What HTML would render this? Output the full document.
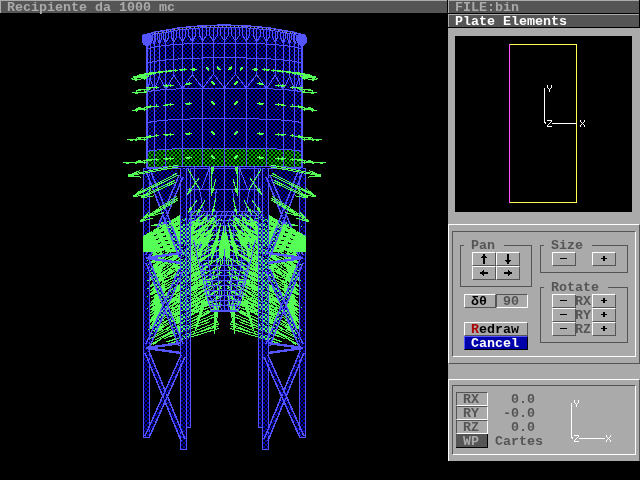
<!DOCTYPE html>
<html><head><meta charset="utf-8"><style>
html,body{margin:0;padding:0;background:#000;}
#root{position:relative;width:640px;height:480px;overflow:hidden;background:#000;font-family:"Liberation Mono",monospace;}
.abs{position:absolute;}
.t{position:absolute;font-family:"Liberation Mono",monospace;font-size:13.33px;line-height:14px;font-weight:bold;white-space:pre;margin-top:1px;margin-left:-1px;will-change:transform;}
svg{position:absolute;left:0;top:0;}
.btn{position:absolute;box-sizing:border-box;background:#aaa;border-top:1px solid #fff;border-left:1px solid #fff;border-right:1px solid #555;border-bottom:1px solid #555;}
.sunk{position:absolute;box-sizing:border-box;background:#aaa;border-top:1px solid #555;border-left:1px solid #555;border-right:1px solid #fff;border-bottom:1px solid #fff;}
</style></head><body><div id="root">
<svg width="448" height="480" viewBox="0 0 448 480" shape-rendering="crispEdges">
<rect width="448" height="480" fill="#000"/>
<defs>
<pattern id="cb" width="4" height="4" patternUnits="userSpaceOnUse"><rect x="1" y="0" width="2" height="2" fill="#0000aa"/><rect x="3" y="2" width="1" height="2" fill="#0000aa"/><rect x="0" y="2" width="1" height="2" fill="#0000aa"/></pattern>
<pattern id="cg" width="4" height="4" patternUnits="userSpaceOnUse"><rect x="1" y="0" width="2" height="2" fill="#00aa00"/><rect x="3" y="2" width="1" height="2" fill="#00aa00"/><rect x="0" y="2" width="1" height="2" fill="#00aa00"/></pattern>
</defs>
<polygon points="146.5,37.0 148.5,35.0 150.5,34.0 152.5,33.3 154.5,32.7 156.5,32.2 158.5,31.8 160.5,31.4 162.5,31.0 164.5,30.7 166.5,30.4 168.5,30.1 170.5,29.8 172.5,29.6 174.5,29.4 176.5,29.1 178.5,29.0 180.5,28.8 182.5,28.6 184.5,28.4 186.5,28.3 188.5,28.1 190.5,28.0 192.5,27.9 194.5,27.8 196.5,27.7 198.5,27.6 200.5,27.5 202.5,27.4 204.5,27.3 206.5,27.3 208.5,27.2 210.5,27.2 212.5,27.1 214.5,27.1 216.5,27.1 218.5,27.0 220.5,27.0 222.5,27.0 224.5,27.0 226.5,27.0 228.5,27.0 230.5,27.0 232.5,27.1 234.5,27.1 236.5,27.1 238.5,27.2 240.5,27.2 242.5,27.3 244.5,27.3 246.5,27.4 248.5,27.5 250.5,27.6 252.5,27.7 254.5,27.8 256.5,27.9 258.5,28.0 260.5,28.1 262.5,28.3 264.5,28.4 266.5,28.6 268.5,28.8 270.5,29.0 272.5,29.1 274.5,29.4 276.5,29.6 278.5,29.8 280.5,30.1 282.5,30.4 284.5,30.7 286.5,31.0 288.5,31.4 290.5,31.8 292.5,32.2 294.5,32.7 296.5,33.3 298.5,34.0 300.5,35.0 302.5,37.0 302.5,168.5 300.5,168.0 298.5,167.8 296.5,167.6 294.5,167.4 292.5,167.3 290.5,167.2 288.5,167.1 286.5,167.0 284.5,166.9 282.5,166.8 280.5,166.8 278.5,166.7 276.5,166.6 274.5,166.6 272.5,166.5 270.5,166.5 268.5,166.4 266.5,166.4 264.5,166.4 262.5,166.3 260.5,166.3 258.5,166.3 256.5,166.2 254.5,166.2 252.5,166.2 250.5,166.1 248.5,166.1 246.5,166.1 244.5,166.1 242.5,166.1 240.5,166.1 238.5,166.0 236.5,166.0 234.5,166.0 232.5,166.0 230.5,166.0 228.5,166.0 226.5,166.0 224.5,166.0 222.5,166.0 220.5,166.0 218.5,166.0 216.5,166.0 214.5,166.0 212.5,166.0 210.5,166.0 208.5,166.1 206.5,166.1 204.5,166.1 202.5,166.1 200.5,166.1 198.5,166.1 196.5,166.2 194.5,166.2 192.5,166.2 190.5,166.3 188.5,166.3 186.5,166.3 184.5,166.4 182.5,166.4 180.5,166.4 178.5,166.5 176.5,166.5 174.5,166.6 172.5,166.6 170.5,166.7 168.5,166.8 166.5,166.8 164.5,166.9 162.5,167.0 160.5,167.1 158.5,167.2 156.5,167.3 154.5,167.4 152.5,167.6 150.5,167.8 148.5,168.0 146.5,168.5" fill="url(#cb)"/>
<polygon points="146.5,152.0 148.5,151.2 150.5,150.8 152.5,150.5 154.5,150.3 156.5,150.1 158.5,149.9 160.5,149.7 162.5,149.6 164.5,149.5 166.5,149.3 168.5,149.2 170.5,149.1 172.5,149.0 174.5,148.9 176.5,148.9 178.5,148.8 180.5,148.7 182.5,148.6 184.5,148.6 186.5,148.5 188.5,148.5 190.5,148.4 192.5,148.4 194.5,148.3 196.5,148.3 198.5,148.2 200.5,148.2 202.5,148.2 204.5,148.1 206.5,148.1 208.5,148.1 210.5,148.1 212.5,148.0 214.5,148.0 216.5,148.0 218.5,148.0 220.5,148.0 222.5,148.0 224.5,148.0 226.5,148.0 228.5,148.0 230.5,148.0 232.5,148.0 234.5,148.0 236.5,148.0 238.5,148.1 240.5,148.1 242.5,148.1 244.5,148.1 246.5,148.2 248.5,148.2 250.5,148.2 252.5,148.3 254.5,148.3 256.5,148.4 258.5,148.4 260.5,148.5 262.5,148.5 264.5,148.6 266.5,148.6 268.5,148.7 270.5,148.8 272.5,148.9 274.5,148.9 276.5,149.0 278.5,149.1 280.5,149.2 282.5,149.3 284.5,149.5 286.5,149.6 288.5,149.7 290.5,149.9 292.5,150.1 294.5,150.3 296.5,150.5 298.5,150.8 300.5,151.2 302.5,152.0 302.5,168.5 300.5,168.0 298.5,167.8 296.5,167.6 294.5,167.4 292.5,167.3 290.5,167.2 288.5,167.1 286.5,167.0 284.5,166.9 282.5,166.8 280.5,166.8 278.5,166.7 276.5,166.6 274.5,166.6 272.5,166.5 270.5,166.5 268.5,166.4 266.5,166.4 264.5,166.4 262.5,166.3 260.5,166.3 258.5,166.3 256.5,166.2 254.5,166.2 252.5,166.2 250.5,166.1 248.5,166.1 246.5,166.1 244.5,166.1 242.5,166.1 240.5,166.1 238.5,166.0 236.5,166.0 234.5,166.0 232.5,166.0 230.5,166.0 228.5,166.0 226.5,166.0 224.5,166.0 222.5,166.0 220.5,166.0 218.5,166.0 216.5,166.0 214.5,166.0 212.5,166.0 210.5,166.0 208.5,166.1 206.5,166.1 204.5,166.1 202.5,166.1 200.5,166.1 198.5,166.1 196.5,166.2 194.5,166.2 192.5,166.2 190.5,166.3 188.5,166.3 186.5,166.3 184.5,166.4 182.5,166.4 180.5,166.4 178.5,166.5 176.5,166.5 174.5,166.6 172.5,166.6 170.5,166.7 168.5,166.8 166.5,166.8 164.5,166.9 162.5,167.0 160.5,167.1 158.5,167.2 156.5,167.3 154.5,167.4 152.5,167.6 150.5,167.8 148.5,168.0 146.5,168.5" fill="url(#cg)"/>
<polygon points="187.0,167.0 263.0,167.0 263.0,211.0 255.5,240.0 250.5,262.0 238.0,311.0 211.0,311.0 198.5,262.0 193.5,240.0 187.0,211.0" fill="url(#cb)"/>
<rect x="187" y="189" width="76" height="1" fill="#5555ff"/>
<rect x="187" y="211" width="76" height="1" fill="#5555ff"/>
<rect x="194" y="167" width="1" height="44" fill="#5555ff"/>
<rect x="209" y="167" width="1" height="44" fill="#5555ff"/>
<rect x="224" y="167" width="1" height="44" fill="#5555ff"/>
<rect x="239" y="167" width="1" height="44" fill="#5555ff"/>
<rect x="254" y="167" width="1" height="44" fill="#5555ff"/>
<line x1="187.5" y1="168.0" x2="199.5" y2="189.0" stroke="#5555ff" stroke-width="1"/>
<line x1="261.5" y1="168.0" x2="249.5" y2="189.0" stroke="#5555ff" stroke-width="1"/>
<line x1="199.5" y1="189.0" x2="203.5" y2="211.0" stroke="#5555ff" stroke-width="1"/>
<line x1="249.5" y1="189.0" x2="245.5" y2="211.0" stroke="#5555ff" stroke-width="1"/>
<line x1="209.5" y1="168.0" x2="201.5" y2="189.0" stroke="#5555ff" stroke-width="1"/>
<line x1="239.5" y1="168.0" x2="247.5" y2="189.0" stroke="#5555ff" stroke-width="1"/>
<line x1="216.5" y1="189.0" x2="213.5" y2="211.0" stroke="#5555ff" stroke-width="1"/>
<line x1="232.5" y1="189.0" x2="235.5" y2="211.0" stroke="#5555ff" stroke-width="1"/>
<rect x="187" y="215" width="73" height="1" fill="#5555ff"/>
<rect x="189" y="220" width="70" height="1" fill="#5555ff"/>
<rect x="190" y="225" width="68" height="1" fill="#5555ff"/>
<rect x="191" y="230" width="66" height="1" fill="#5555ff"/>
<rect x="192" y="235" width="64" height="1" fill="#5555ff"/>
<rect x="193" y="240" width="62" height="1" fill="#5555ff"/>
<rect x="194" y="245" width="59" height="1" fill="#5555ff"/>
<rect x="195" y="250" width="57" height="1" fill="#5555ff"/>
<rect x="196" y="255" width="55" height="1" fill="#5555ff"/>
<rect x="198" y="260" width="52" height="1" fill="#5555ff"/>
<rect x="199" y="265" width="50" height="1" fill="#5555ff"/>
<rect x="200" y="270" width="47" height="1" fill="#5555ff"/>
<rect x="201" y="275" width="45" height="1" fill="#5555ff"/>
<rect x="203" y="280" width="42" height="1" fill="#5555ff"/>
<rect x="204" y="285" width="40" height="1" fill="#5555ff"/>
<rect x="205" y="290" width="37" height="1" fill="#5555ff"/>
<rect x="206" y="295" width="35" height="1" fill="#5555ff"/>
<rect x="208" y="300" width="32" height="1" fill="#5555ff"/>
<rect x="209" y="305" width="30" height="1" fill="#5555ff"/>
<rect x="210" y="310" width="27" height="1" fill="#5555ff"/>
<polyline points="191.5,211.0 193.2,262.0 211.3,311.0" fill="none" stroke="#5555ff" stroke-width="1"/>
<polyline points="199.5,211.0 200.8,262.0 214.5,311.0" fill="none" stroke="#5555ff" stroke-width="1"/>
<polyline points="207.5,211.0 208.3,262.0 217.7,311.0" fill="none" stroke="#5555ff" stroke-width="1"/>
<polyline points="216.5,211.0 216.9,262.0 221.3,311.0" fill="none" stroke="#5555ff" stroke-width="1"/>
<polyline points="224.5,211.0 224.5,262.0 224.5,311.0" fill="none" stroke="#5555ff" stroke-width="1"/>
<polyline points="233.5,211.0 233.1,262.0 228.1,311.0" fill="none" stroke="#5555ff" stroke-width="1"/>
<polyline points="242.5,211.0 241.6,262.0 231.7,311.0" fill="none" stroke="#5555ff" stroke-width="1"/>
<polyline points="250.5,211.0 249.2,262.0 234.9,311.0" fill="none" stroke="#5555ff" stroke-width="1"/>
<polyline points="258.5,211.0 256.8,262.0 238.1,311.0" fill="none" stroke="#5555ff" stroke-width="1"/>
<rect x="187" y="225" width="76" height="1" fill="#5555ff"/>
<line x1="187.5" y1="224.0" x2="192.5" y2="212.0" stroke="#5555ff" stroke-width="1"/>
<line x1="192.5" y1="224.0" x2="197.5" y2="212.0" stroke="#5555ff" stroke-width="1"/>
<line x1="197.5" y1="224.0" x2="202.5" y2="212.0" stroke="#5555ff" stroke-width="1"/>
<line x1="202.5" y1="224.0" x2="207.5" y2="212.0" stroke="#5555ff" stroke-width="1"/>
<line x1="207.5" y1="224.0" x2="212.5" y2="212.0" stroke="#5555ff" stroke-width="1"/>
<line x1="212.5" y1="224.0" x2="217.5" y2="212.0" stroke="#5555ff" stroke-width="1"/>
<line x1="217.5" y1="224.0" x2="222.5" y2="212.0" stroke="#5555ff" stroke-width="1"/>
<line x1="222.5" y1="224.0" x2="227.5" y2="212.0" stroke="#5555ff" stroke-width="1"/>
<line x1="227.5" y1="224.0" x2="232.5" y2="212.0" stroke="#5555ff" stroke-width="1"/>
<line x1="232.5" y1="224.0" x2="237.5" y2="212.0" stroke="#5555ff" stroke-width="1"/>
<line x1="237.5" y1="224.0" x2="242.5" y2="212.0" stroke="#5555ff" stroke-width="1"/>
<line x1="242.5" y1="224.0" x2="247.5" y2="212.0" stroke="#5555ff" stroke-width="1"/>
<line x1="247.5" y1="224.0" x2="252.5" y2="212.0" stroke="#5555ff" stroke-width="1"/>
<line x1="252.5" y1="224.0" x2="257.5" y2="212.0" stroke="#5555ff" stroke-width="1"/>
<line x1="257.5" y1="224.0" x2="262.5" y2="212.0" stroke="#5555ff" stroke-width="1"/>
<line x1="147.5" y1="39.0" x2="147.5" y2="79.5" stroke="#5555ff" stroke-width="1"/>
<line x1="147.5" y1="37.6" x2="147.5" y2="168.1" stroke="#5555ff" stroke-width="1"/>
<line x1="150.5" y1="36.2" x2="150.5" y2="77.9" stroke="#5555ff" stroke-width="1"/>
<line x1="154.5" y1="34.8" x2="154.5" y2="167.5" stroke="#5555ff" stroke-width="1"/>
<line x1="159.5" y1="33.6" x2="159.5" y2="76.5" stroke="#5555ff" stroke-width="1"/>
<line x1="165.5" y1="32.4" x2="165.5" y2="166.9" stroke="#5555ff" stroke-width="1"/>
<line x1="173.5" y1="31.4" x2="173.5" y2="75.3" stroke="#5555ff" stroke-width="1"/>
<line x1="182.5" y1="30.6" x2="182.5" y2="166.4" stroke="#5555ff" stroke-width="1"/>
<line x1="192.5" y1="29.9" x2="192.5" y2="74.5" stroke="#5555ff" stroke-width="1"/>
<line x1="202.5" y1="29.4" x2="202.5" y2="166.1" stroke="#5555ff" stroke-width="1"/>
<line x1="213.5" y1="29.1" x2="213.5" y2="74.1" stroke="#5555ff" stroke-width="1"/>
<line x1="224.5" y1="29.0" x2="224.5" y2="166.0" stroke="#5555ff" stroke-width="1"/>
<line x1="235.5" y1="29.1" x2="235.5" y2="74.1" stroke="#5555ff" stroke-width="1"/>
<line x1="246.5" y1="29.4" x2="246.5" y2="166.1" stroke="#5555ff" stroke-width="1"/>
<line x1="256.5" y1="29.9" x2="256.5" y2="74.5" stroke="#5555ff" stroke-width="1"/>
<line x1="266.5" y1="30.6" x2="266.5" y2="166.4" stroke="#5555ff" stroke-width="1"/>
<line x1="275.5" y1="31.4" x2="275.5" y2="75.3" stroke="#5555ff" stroke-width="1"/>
<line x1="283.5" y1="32.4" x2="283.5" y2="166.9" stroke="#5555ff" stroke-width="1"/>
<line x1="289.5" y1="33.6" x2="289.5" y2="76.5" stroke="#5555ff" stroke-width="1"/>
<line x1="294.5" y1="34.8" x2="294.5" y2="167.5" stroke="#5555ff" stroke-width="1"/>
<line x1="298.5" y1="36.2" x2="298.5" y2="77.9" stroke="#5555ff" stroke-width="1"/>
<line x1="301.5" y1="37.6" x2="301.5" y2="168.1" stroke="#5555ff" stroke-width="1"/>
<line x1="301.5" y1="39.0" x2="301.5" y2="79.5" stroke="#5555ff" stroke-width="1"/>
<line x1="146.5" y1="36.0" x2="146.5" y2="168.0" stroke="#5555ff" stroke-width="1"/>
<line x1="302.5" y1="36.0" x2="302.5" y2="168.0" stroke="#5555ff" stroke-width="1"/>
<polyline points="146.5,50.0 148.5,48.6 150.5,47.9 152.5,47.4 154.5,47.0 156.5,46.6 158.5,46.3 160.5,46.1 162.5,45.8 164.5,45.6 166.5,45.4 168.5,45.2 170.5,45.0 172.5,44.8 174.5,44.7 176.5,44.5 178.5,44.4 180.5,44.2 182.5,44.1 184.5,44.0 186.5,43.9 188.5,43.8 190.5,43.7 192.5,43.6 194.5,43.5 196.5,43.5 198.5,43.4 200.5,43.3 202.5,43.3 204.5,43.2 206.5,43.2 208.5,43.2 210.5,43.1 212.5,43.1 214.5,43.1 216.5,43.0 218.5,43.0 220.5,43.0 222.5,43.0 224.5,43.0 226.5,43.0 228.5,43.0 230.5,43.0 232.5,43.0 234.5,43.1 236.5,43.1 238.5,43.1 240.5,43.2 242.5,43.2 244.5,43.2 246.5,43.3 248.5,43.3 250.5,43.4 252.5,43.5 254.5,43.5 256.5,43.6 258.5,43.7 260.5,43.8 262.5,43.9 264.5,44.0 266.5,44.1 268.5,44.2 270.5,44.4 272.5,44.5 274.5,44.7 276.5,44.8 278.5,45.0 280.5,45.2 282.5,45.4 284.5,45.6 286.5,45.8 288.5,46.1 290.5,46.3 292.5,46.6 294.5,47.0 296.5,47.4 298.5,47.9 300.5,48.6 302.5,50.0" fill="none" stroke="#5555ff" stroke-width="1"/>
<polyline points="146.5,64.2 148.5,62.9 150.5,62.3 152.5,61.8 154.5,61.4 156.5,61.1 158.5,60.8 160.5,60.5 162.5,60.3 164.5,60.1 166.5,59.9 168.5,59.7 170.5,59.5 172.5,59.4 174.5,59.2 176.5,59.1 178.5,59.0 180.5,58.8 182.5,58.7 184.5,58.6 186.5,58.5 188.5,58.4 190.5,58.4 192.5,58.3 194.5,58.2 196.5,58.1 198.5,58.1 200.5,58.0 202.5,58.0 204.5,57.9 206.5,57.9 208.5,57.8 210.5,57.8 212.5,57.8 214.5,57.8 216.5,57.7 218.5,57.7 220.5,57.7 222.5,57.7 224.5,57.7 226.5,57.7 228.5,57.7 230.5,57.7 232.5,57.7 234.5,57.8 236.5,57.8 238.5,57.8 240.5,57.8 242.5,57.9 244.5,57.9 246.5,58.0 248.5,58.0 250.5,58.1 252.5,58.1 254.5,58.2 256.5,58.3 258.5,58.4 260.5,58.4 262.5,58.5 264.5,58.6 266.5,58.7 268.5,58.8 270.5,59.0 272.5,59.1 274.5,59.2 276.5,59.4 278.5,59.5 280.5,59.7 282.5,59.9 284.5,60.1 286.5,60.3 288.5,60.5 290.5,60.8 292.5,61.1 294.5,61.4 296.5,61.8 298.5,62.3 300.5,62.9 302.5,64.2" fill="none" stroke="#5555ff" stroke-width="1"/>
<polyline points="146.5,92.5 148.5,91.6 150.5,91.2 152.5,90.8 154.5,90.6 156.5,90.3 158.5,90.1 160.5,90.0 162.5,89.8 164.5,89.7 166.5,89.5 168.5,89.4 170.5,89.3 172.5,89.2 174.5,89.1 176.5,89.0 178.5,88.9 180.5,88.8 182.5,88.7 184.5,88.6 186.5,88.6 188.5,88.5 190.5,88.5 192.5,88.4 194.5,88.4 196.5,88.3 198.5,88.3 200.5,88.2 202.5,88.2 204.5,88.2 206.5,88.1 208.5,88.1 210.5,88.1 212.5,88.1 214.5,88.0 216.5,88.0 218.5,88.0 220.5,88.0 222.5,88.0 224.5,88.0 226.5,88.0 228.5,88.0 230.5,88.0 232.5,88.0 234.5,88.0 236.5,88.1 238.5,88.1 240.5,88.1 242.5,88.1 244.5,88.2 246.5,88.2 248.5,88.2 250.5,88.3 252.5,88.3 254.5,88.4 256.5,88.4 258.5,88.5 260.5,88.5 262.5,88.6 264.5,88.6 266.5,88.7 268.5,88.8 270.5,88.9 272.5,89.0 274.5,89.1 276.5,89.2 278.5,89.3 280.5,89.4 282.5,89.5 284.5,89.7 286.5,89.8 288.5,90.0 290.5,90.1 292.5,90.3 294.5,90.6 296.5,90.8 298.5,91.2 300.5,91.6 302.5,92.5" fill="none" stroke="#5555ff" stroke-width="1"/>
<polyline points="146.5,123.5 148.5,122.5 150.5,122.0 152.5,121.7 154.5,121.4 156.5,121.1 158.5,120.9 160.5,120.7 162.5,120.5 164.5,120.3 166.5,120.2 168.5,120.0 170.5,119.9 172.5,119.8 174.5,119.7 176.5,119.6 178.5,119.5 180.5,119.4 182.5,119.3 184.5,119.2 186.5,119.1 188.5,119.1 190.5,119.0 192.5,118.9 194.5,118.9 196.5,118.8 198.5,118.8 200.5,118.7 202.5,118.7 204.5,118.7 206.5,118.6 208.5,118.6 210.5,118.6 212.5,118.6 214.5,118.5 216.5,118.5 218.5,118.5 220.5,118.5 222.5,118.5 224.5,118.5 226.5,118.5 228.5,118.5 230.5,118.5 232.5,118.5 234.5,118.5 236.5,118.6 238.5,118.6 240.5,118.6 242.5,118.6 244.5,118.7 246.5,118.7 248.5,118.7 250.5,118.8 252.5,118.8 254.5,118.9 256.5,118.9 258.5,119.0 260.5,119.1 262.5,119.1 264.5,119.2 266.5,119.3 268.5,119.4 270.5,119.5 272.5,119.6 274.5,119.7 276.5,119.8 278.5,119.9 280.5,120.0 282.5,120.2 284.5,120.3 286.5,120.5 288.5,120.7 290.5,120.9 292.5,121.1 294.5,121.4 296.5,121.7 298.5,122.0 300.5,122.5 302.5,123.5" fill="none" stroke="#5555ff" stroke-width="1"/>
<polyline points="146.5,152.0 148.5,151.2 150.5,150.8 152.5,150.5 154.5,150.3 156.5,150.1 158.5,149.9 160.5,149.7 162.5,149.6 164.5,149.5 166.5,149.3 168.5,149.2 170.5,149.1 172.5,149.0 174.5,148.9 176.5,148.9 178.5,148.8 180.5,148.7 182.5,148.6 184.5,148.6 186.5,148.5 188.5,148.5 190.5,148.4 192.5,148.4 194.5,148.3 196.5,148.3 198.5,148.2 200.5,148.2 202.5,148.2 204.5,148.1 206.5,148.1 208.5,148.1 210.5,148.1 212.5,148.0 214.5,148.0 216.5,148.0 218.5,148.0 220.5,148.0 222.5,148.0 224.5,148.0 226.5,148.0 228.5,148.0 230.5,148.0 232.5,148.0 234.5,148.0 236.5,148.0 238.5,148.1 240.5,148.1 242.5,148.1 244.5,148.1 246.5,148.2 248.5,148.2 250.5,148.2 252.5,148.3 254.5,148.3 256.5,148.4 258.5,148.4 260.5,148.5 262.5,148.5 264.5,148.6 266.5,148.6 268.5,148.7 270.5,148.8 272.5,148.9 274.5,148.9 276.5,149.0 278.5,149.1 280.5,149.2 282.5,149.3 284.5,149.5 286.5,149.6 288.5,149.7 290.5,149.9 292.5,150.1 294.5,150.3 296.5,150.5 298.5,150.8 300.5,151.2 302.5,152.0" fill="none" stroke="#5555ff" stroke-width="1"/>
<polyline points="146.5,168.5 148.5,168.0 150.5,167.8 152.5,167.6 154.5,167.4 156.5,167.3 158.5,167.2 160.5,167.1 162.5,167.0 164.5,166.9 166.5,166.8 168.5,166.8 170.5,166.7 172.5,166.6 174.5,166.6 176.5,166.5 178.5,166.5 180.5,166.4 182.5,166.4 184.5,166.4 186.5,166.3 188.5,166.3 190.5,166.3 192.5,166.2 194.5,166.2 196.5,166.2 198.5,166.1 200.5,166.1 202.5,166.1 204.5,166.1 206.5,166.1 208.5,166.1 210.5,166.0 212.5,166.0 214.5,166.0 216.5,166.0 218.5,166.0 220.5,166.0 222.5,166.0 224.5,166.0 226.5,166.0 228.5,166.0 230.5,166.0 232.5,166.0 234.5,166.0 236.5,166.0 238.5,166.0 240.5,166.1 242.5,166.1 244.5,166.1 246.5,166.1 248.5,166.1 250.5,166.1 252.5,166.2 254.5,166.2 256.5,166.2 258.5,166.3 260.5,166.3 262.5,166.3 264.5,166.4 266.5,166.4 268.5,166.4 270.5,166.5 272.5,166.5 274.5,166.6 276.5,166.6 278.5,166.7 280.5,166.8 282.5,166.8 284.5,166.9 286.5,167.0 288.5,167.1 290.5,167.2 292.5,167.3 294.5,167.4 296.5,167.6 298.5,167.8 300.5,168.0 302.5,168.5" fill="none" stroke="#5555ff" stroke-width="1"/>
<line x1="147.5" y1="36.2" x2="147.5" y2="42.6" stroke="#5555ff" stroke-width="1"/>
<line x1="147.5" y1="42.6" x2="147.5" y2="48.0" stroke="#5555ff" stroke-width="1"/>
<line x1="147.5" y1="36.2" x2="147.5" y2="42.2" stroke="#5555ff" stroke-width="1"/>
<line x1="147.5" y1="42.2" x2="147.5" y2="47.0" stroke="#5555ff" stroke-width="1"/>
<line x1="147.5" y1="36.1" x2="147.5" y2="41.9" stroke="#5555ff" stroke-width="1"/>
<line x1="148.5" y1="35.9" x2="148.5" y2="41.5" stroke="#5555ff" stroke-width="1"/>
<line x1="148.5" y1="41.5" x2="147.5" y2="47.0" stroke="#5555ff" stroke-width="1"/>
<line x1="149.5" y1="35.7" x2="149.5" y2="41.1" stroke="#5555ff" stroke-width="1"/>
<line x1="149.5" y1="41.1" x2="150.5" y2="46.0" stroke="#5555ff" stroke-width="1"/>
<line x1="150.5" y1="35.5" x2="150.5" y2="40.7" stroke="#5555ff" stroke-width="1"/>
<line x1="151.5" y1="35.1" x2="151.5" y2="40.4" stroke="#5555ff" stroke-width="1"/>
<line x1="151.5" y1="40.4" x2="150.5" y2="46.0" stroke="#5555ff" stroke-width="1"/>
<line x1="152.5" y1="34.7" x2="152.5" y2="40.0" stroke="#5555ff" stroke-width="1"/>
<line x1="152.5" y1="40.0" x2="154.5" y2="45.1" stroke="#5555ff" stroke-width="1"/>
<line x1="154.5" y1="34.3" x2="154.5" y2="39.7" stroke="#5555ff" stroke-width="1"/>
<line x1="155.5" y1="33.8" x2="155.5" y2="39.3" stroke="#5555ff" stroke-width="1"/>
<line x1="155.5" y1="39.3" x2="154.5" y2="45.1" stroke="#5555ff" stroke-width="1"/>
<line x1="157.5" y1="33.5" x2="157.5" y2="39.0" stroke="#5555ff" stroke-width="1"/>
<line x1="157.5" y1="39.0" x2="159.5" y2="44.2" stroke="#5555ff" stroke-width="1"/>
<line x1="159.5" y1="33.3" x2="159.5" y2="38.7" stroke="#5555ff" stroke-width="1"/>
<line x1="161.5" y1="33.1" x2="161.5" y2="38.4" stroke="#5555ff" stroke-width="1"/>
<line x1="161.5" y1="38.4" x2="159.5" y2="44.2" stroke="#5555ff" stroke-width="1"/>
<line x1="163.5" y1="32.7" x2="163.5" y2="38.1" stroke="#5555ff" stroke-width="1"/>
<line x1="163.5" y1="38.1" x2="165.5" y2="43.4" stroke="#5555ff" stroke-width="1"/>
<line x1="165.5" y1="32.3" x2="165.5" y2="37.8" stroke="#5555ff" stroke-width="1"/>
<line x1="168.5" y1="31.9" x2="168.5" y2="37.5" stroke="#5555ff" stroke-width="1"/>
<line x1="168.5" y1="37.5" x2="165.5" y2="43.4" stroke="#5555ff" stroke-width="1"/>
<line x1="171.5" y1="31.4" x2="171.5" y2="37.2" stroke="#5555ff" stroke-width="1"/>
<line x1="171.5" y1="37.2" x2="173.5" y2="42.7" stroke="#5555ff" stroke-width="1"/>
<line x1="173.5" y1="30.8" x2="173.5" y2="37.0" stroke="#5555ff" stroke-width="1"/>
<line x1="176.5" y1="30.3" x2="176.5" y2="36.7" stroke="#5555ff" stroke-width="1"/>
<line x1="176.5" y1="36.7" x2="173.5" y2="42.7" stroke="#5555ff" stroke-width="1"/>
<line x1="179.5" y1="29.9" x2="179.5" y2="36.5" stroke="#5555ff" stroke-width="1"/>
<line x1="179.5" y1="36.5" x2="182.5" y2="42.1" stroke="#5555ff" stroke-width="1"/>
<line x1="182.5" y1="29.6" x2="182.5" y2="36.3" stroke="#5555ff" stroke-width="1"/>
<line x1="185.5" y1="29.3" x2="185.5" y2="36.1" stroke="#5555ff" stroke-width="1"/>
<line x1="185.5" y1="36.1" x2="182.5" y2="42.1" stroke="#5555ff" stroke-width="1"/>
<line x1="188.5" y1="29.0" x2="188.5" y2="35.9" stroke="#5555ff" stroke-width="1"/>
<line x1="188.5" y1="35.9" x2="192.5" y2="41.6" stroke="#5555ff" stroke-width="1"/>
<line x1="192.5" y1="28.7" x2="192.5" y2="35.7" stroke="#5555ff" stroke-width="1"/>
<line x1="195.5" y1="28.4" x2="195.5" y2="35.6" stroke="#5555ff" stroke-width="1"/>
<line x1="195.5" y1="35.6" x2="192.5" y2="41.6" stroke="#5555ff" stroke-width="1"/>
<line x1="199.5" y1="28.1" x2="199.5" y2="35.4" stroke="#5555ff" stroke-width="1"/>
<line x1="199.5" y1="35.4" x2="202.5" y2="41.3" stroke="#5555ff" stroke-width="1"/>
<line x1="202.5" y1="27.9" x2="202.5" y2="35.3" stroke="#5555ff" stroke-width="1"/>
<line x1="206.5" y1="27.7" x2="206.5" y2="35.2" stroke="#5555ff" stroke-width="1"/>
<line x1="206.5" y1="35.2" x2="202.5" y2="41.3" stroke="#5555ff" stroke-width="1"/>
<line x1="209.5" y1="27.6" x2="209.5" y2="35.1" stroke="#5555ff" stroke-width="1"/>
<line x1="209.5" y1="35.1" x2="213.5" y2="41.1" stroke="#5555ff" stroke-width="1"/>
<line x1="213.5" y1="27.4" x2="213.5" y2="35.1" stroke="#5555ff" stroke-width="1"/>
<line x1="217.5" y1="27.3" x2="217.5" y2="35.0" stroke="#5555ff" stroke-width="1"/>
<line x1="217.5" y1="35.0" x2="213.5" y2="41.1" stroke="#5555ff" stroke-width="1"/>
<line x1="220.5" y1="27.1" x2="220.5" y2="35.0" stroke="#5555ff" stroke-width="1"/>
<line x1="220.5" y1="35.0" x2="224.5" y2="41.0" stroke="#5555ff" stroke-width="1"/>
<line x1="224.5" y1="27.0" x2="224.5" y2="35.0" stroke="#5555ff" stroke-width="1"/>
<line x1="228.5" y1="27.2" x2="228.5" y2="35.0" stroke="#5555ff" stroke-width="1"/>
<line x1="228.5" y1="35.0" x2="224.5" y2="41.0" stroke="#5555ff" stroke-width="1"/>
<line x1="231.5" y1="27.3" x2="231.5" y2="35.0" stroke="#5555ff" stroke-width="1"/>
<line x1="231.5" y1="35.0" x2="235.5" y2="41.1" stroke="#5555ff" stroke-width="1"/>
<line x1="235.5" y1="27.5" x2="235.5" y2="35.1" stroke="#5555ff" stroke-width="1"/>
<line x1="239.5" y1="27.6" x2="239.5" y2="35.1" stroke="#5555ff" stroke-width="1"/>
<line x1="239.5" y1="35.1" x2="235.5" y2="41.1" stroke="#5555ff" stroke-width="1"/>
<line x1="242.5" y1="27.8" x2="242.5" y2="35.2" stroke="#5555ff" stroke-width="1"/>
<line x1="242.5" y1="35.2" x2="246.5" y2="41.3" stroke="#5555ff" stroke-width="1"/>
<line x1="246.5" y1="27.9" x2="246.5" y2="35.3" stroke="#5555ff" stroke-width="1"/>
<line x1="249.5" y1="28.2" x2="249.5" y2="35.4" stroke="#5555ff" stroke-width="1"/>
<line x1="249.5" y1="35.4" x2="246.5" y2="41.3" stroke="#5555ff" stroke-width="1"/>
<line x1="253.5" y1="28.5" x2="253.5" y2="35.6" stroke="#5555ff" stroke-width="1"/>
<line x1="253.5" y1="35.6" x2="256.5" y2="41.6" stroke="#5555ff" stroke-width="1"/>
<line x1="256.5" y1="28.8" x2="256.5" y2="35.7" stroke="#5555ff" stroke-width="1"/>
<line x1="260.5" y1="29.1" x2="260.5" y2="35.9" stroke="#5555ff" stroke-width="1"/>
<line x1="260.5" y1="35.9" x2="256.5" y2="41.6" stroke="#5555ff" stroke-width="1"/>
<line x1="263.5" y1="29.4" x2="263.5" y2="36.1" stroke="#5555ff" stroke-width="1"/>
<line x1="263.5" y1="36.1" x2="266.5" y2="42.1" stroke="#5555ff" stroke-width="1"/>
<line x1="266.5" y1="29.7" x2="266.5" y2="36.3" stroke="#5555ff" stroke-width="1"/>
<line x1="269.5" y1="29.9" x2="269.5" y2="36.5" stroke="#5555ff" stroke-width="1"/>
<line x1="269.5" y1="36.5" x2="266.5" y2="42.1" stroke="#5555ff" stroke-width="1"/>
<line x1="272.5" y1="30.5" x2="272.5" y2="36.7" stroke="#5555ff" stroke-width="1"/>
<line x1="272.5" y1="36.7" x2="275.5" y2="42.7" stroke="#5555ff" stroke-width="1"/>
<line x1="275.5" y1="31.0" x2="275.5" y2="37.0" stroke="#5555ff" stroke-width="1"/>
<line x1="277.5" y1="31.6" x2="277.5" y2="37.2" stroke="#5555ff" stroke-width="1"/>
<line x1="277.5" y1="37.2" x2="275.5" y2="42.7" stroke="#5555ff" stroke-width="1"/>
<line x1="280.5" y1="32.1" x2="280.5" y2="37.5" stroke="#5555ff" stroke-width="1"/>
<line x1="280.5" y1="37.5" x2="283.5" y2="43.4" stroke="#5555ff" stroke-width="1"/>
<line x1="283.5" y1="32.5" x2="283.5" y2="37.8" stroke="#5555ff" stroke-width="1"/>
<line x1="285.5" y1="32.9" x2="285.5" y2="38.1" stroke="#5555ff" stroke-width="1"/>
<line x1="285.5" y1="38.1" x2="283.5" y2="43.4" stroke="#5555ff" stroke-width="1"/>
<line x1="287.5" y1="33.2" x2="287.5" y2="38.4" stroke="#5555ff" stroke-width="1"/>
<line x1="287.5" y1="38.4" x2="289.5" y2="44.2" stroke="#5555ff" stroke-width="1"/>
<line x1="289.5" y1="33.4" x2="289.5" y2="38.7" stroke="#5555ff" stroke-width="1"/>
<line x1="291.5" y1="33.7" x2="291.5" y2="39.0" stroke="#5555ff" stroke-width="1"/>
<line x1="291.5" y1="39.0" x2="289.5" y2="44.2" stroke="#5555ff" stroke-width="1"/>
<line x1="293.5" y1="34.1" x2="293.5" y2="39.3" stroke="#5555ff" stroke-width="1"/>
<line x1="293.5" y1="39.3" x2="294.5" y2="45.1" stroke="#5555ff" stroke-width="1"/>
<line x1="294.5" y1="34.6" x2="294.5" y2="39.7" stroke="#5555ff" stroke-width="1"/>
<line x1="296.5" y1="35.0" x2="296.5" y2="40.0" stroke="#5555ff" stroke-width="1"/>
<line x1="296.5" y1="40.0" x2="294.5" y2="45.1" stroke="#5555ff" stroke-width="1"/>
<line x1="297.5" y1="35.4" x2="297.5" y2="40.4" stroke="#5555ff" stroke-width="1"/>
<line x1="297.5" y1="40.4" x2="298.5" y2="46.0" stroke="#5555ff" stroke-width="1"/>
<line x1="298.5" y1="35.7" x2="298.5" y2="40.7" stroke="#5555ff" stroke-width="1"/>
<line x1="299.5" y1="36.0" x2="299.5" y2="41.1" stroke="#5555ff" stroke-width="1"/>
<line x1="299.5" y1="41.1" x2="298.5" y2="46.0" stroke="#5555ff" stroke-width="1"/>
<line x1="300.5" y1="36.1" x2="300.5" y2="41.5" stroke="#5555ff" stroke-width="1"/>
<line x1="300.5" y1="41.5" x2="301.5" y2="47.0" stroke="#5555ff" stroke-width="1"/>
<line x1="301.5" y1="36.3" x2="301.5" y2="41.9" stroke="#5555ff" stroke-width="1"/>
<line x1="301.5" y1="36.4" x2="301.5" y2="42.2" stroke="#5555ff" stroke-width="1"/>
<line x1="301.5" y1="42.2" x2="301.5" y2="47.0" stroke="#5555ff" stroke-width="1"/>
<line x1="301.5" y1="36.5" x2="301.5" y2="42.6" stroke="#5555ff" stroke-width="1"/>
<line x1="301.5" y1="42.6" x2="301.5" y2="48.0" stroke="#5555ff" stroke-width="1"/>
<polyline points="147.0,92.5 147.0,79.5 147.8,91.9" fill="none" stroke="#5555ff" stroke-width="1"/>
<polyline points="147.8,91.9 150.1,77.9 154.0,90.6" fill="none" stroke="#5555ff" stroke-width="1"/>
<polyline points="154.0,90.6 159.3,76.5 165.9,89.6" fill="none" stroke="#5555ff" stroke-width="1"/>
<polyline points="165.9,89.6 173.8,75.3 182.6,88.7" fill="none" stroke="#5555ff" stroke-width="1"/>
<polyline points="182.6,88.7 192.3,74.5 202.7,88.2" fill="none" stroke="#5555ff" stroke-width="1"/>
<polyline points="202.7,88.2 213.5,74.1 224.5,88.0" fill="none" stroke="#5555ff" stroke-width="1"/>
<polyline points="224.5,88.0 235.5,74.1 246.3,88.2" fill="none" stroke="#5555ff" stroke-width="1"/>
<polyline points="246.3,88.2 256.7,74.5 266.4,88.7" fill="none" stroke="#5555ff" stroke-width="1"/>
<polyline points="266.4,88.7 275.2,75.3 283.1,89.6" fill="none" stroke="#5555ff" stroke-width="1"/>
<polyline points="283.1,89.6 289.7,76.5 295.0,90.6" fill="none" stroke="#5555ff" stroke-width="1"/>
<polyline points="295.0,90.6 298.9,77.9 301.2,91.9" fill="none" stroke="#5555ff" stroke-width="1"/>
<polyline points="301.2,91.9 302.0,79.5 302.0,92.5" fill="none" stroke="#5555ff" stroke-width="1"/>
<polyline points="142.0,37.0 144.0,35.0 146.0,34.5 148.0,34.0 150.0,33.5 152.0,32.9 154.0,32.3 156.0,31.7 158.0,31.5 160.0,31.2 162.0,31.0 164.0,30.7 166.0,30.3 168.0,30.0 170.0,29.6 172.0,29.2 174.0,28.8 176.0,28.4 178.0,28.0 180.0,27.8 182.0,27.6 184.0,27.5 186.0,27.3 188.0,27.1 190.0,26.9 192.0,26.7 194.0,26.5 196.0,26.4 198.0,26.2 200.0,26.0 202.0,25.9 204.0,25.8 206.0,25.8 208.0,25.7 210.0,25.6 212.0,25.5 214.0,25.4 216.0,25.3 218.0,25.2 220.0,25.2 222.0,25.1 224.0,25.0 226.0,25.1 228.0,25.2 230.0,25.2 232.0,25.3 234.0,25.4 236.0,25.5 238.0,25.6 240.0,25.7 242.0,25.8 244.0,25.8 246.0,25.9 248.0,26.0 250.0,26.2 252.0,26.4 254.0,26.5 256.0,26.7 258.0,26.9 260.0,27.1 262.0,27.3 264.0,27.5 266.0,27.6 268.0,27.8 270.0,28.0 272.0,28.4 274.0,28.8 276.0,29.2 278.0,29.6 280.0,30.0 282.0,30.3 284.0,30.7 286.0,31.0 288.0,31.2 290.0,31.5 292.0,31.7 294.0,32.3 296.0,32.9 298.0,33.5 300.0,34.0 302.0,34.5 304.0,35.0 306.0,37.0" fill="none" stroke="#5555ff" stroke-width="1.5"/>
<polyline points="150.0,35.5 152.0,34.9 154.0,34.3 156.0,33.7 158.0,33.5 160.0,33.2 162.0,33.0 164.0,32.7 166.0,32.3 168.0,32.0 170.0,31.6 172.0,31.2 174.0,30.8 176.0,30.4 178.0,30.0 180.0,29.8 182.0,29.6 184.0,29.5 186.0,29.3 188.0,29.1 190.0,28.9 192.0,28.7 194.0,28.5 196.0,28.4 198.0,28.2 200.0,28.0 202.0,27.9 204.0,27.8 206.0,27.8 208.0,27.7 210.0,27.6 212.0,27.5 214.0,27.4 216.0,27.3 218.0,27.2 220.0,27.2 222.0,27.1 224.0,27.0 226.0,27.1 228.0,27.2 230.0,27.2 232.0,27.3 234.0,27.4 236.0,27.5 238.0,27.6 240.0,27.7 242.0,27.8 244.0,27.8 246.0,27.9 248.0,28.0 250.0,28.2 252.0,28.4 254.0,28.5 256.0,28.7 258.0,28.9 260.0,29.1 262.0,29.3 264.0,29.5 266.0,29.6 268.0,29.8 270.0,30.0 272.0,30.4 274.0,30.8 276.0,31.2 278.0,31.6 280.0,32.0 282.0,32.3 284.0,32.7 286.0,33.0 288.0,33.2 290.0,33.5 292.0,33.7 294.0,34.3 296.0,34.9 298.0,35.5" fill="none" stroke="#5555ff" stroke-width="1"/>
<rect x="150" y="34" width="1" height="1" fill="#aaaa55"/>
<rect x="154" y="33" width="1" height="1" fill="#aaaa55"/>
<rect x="158" y="32" width="1" height="1" fill="#aaaa55"/>
<rect x="162" y="32" width="1" height="1" fill="#aaaa55"/>
<rect x="166" y="31" width="1" height="1" fill="#aaaa55"/>
<rect x="170" y="30" width="1" height="1" fill="#aaaa55"/>
<rect x="174" y="29" width="1" height="1" fill="#aaaa55"/>
<rect x="178" y="29" width="1" height="1" fill="#aaaa55"/>
<rect x="182" y="28" width="1" height="1" fill="#aaaa55"/>
<rect x="186" y="28" width="1" height="1" fill="#aaaa55"/>
<rect x="190" y="27" width="1" height="1" fill="#aaaa55"/>
<rect x="194" y="27" width="1" height="1" fill="#aaaa55"/>
<rect x="198" y="27" width="1" height="1" fill="#aaaa55"/>
<rect x="202" y="26" width="1" height="1" fill="#aaaa55"/>
<rect x="206" y="26" width="1" height="1" fill="#aaaa55"/>
<rect x="210" y="26" width="1" height="1" fill="#aaaa55"/>
<rect x="214" y="26" width="1" height="1" fill="#aaaa55"/>
<rect x="218" y="26" width="1" height="1" fill="#aaaa55"/>
<rect x="222" y="26" width="1" height="1" fill="#aaaa55"/>
<rect x="226" y="26" width="1" height="1" fill="#aaaa55"/>
<rect x="230" y="26" width="1" height="1" fill="#aaaa55"/>
<rect x="234" y="26" width="1" height="1" fill="#aaaa55"/>
<rect x="238" y="26" width="1" height="1" fill="#aaaa55"/>
<rect x="242" y="26" width="1" height="1" fill="#aaaa55"/>
<rect x="246" y="26" width="1" height="1" fill="#aaaa55"/>
<rect x="250" y="27" width="1" height="1" fill="#aaaa55"/>
<rect x="254" y="27" width="1" height="1" fill="#aaaa55"/>
<rect x="258" y="27" width="1" height="1" fill="#aaaa55"/>
<rect x="262" y="28" width="1" height="1" fill="#aaaa55"/>
<rect x="266" y="28" width="1" height="1" fill="#aaaa55"/>
<rect x="270" y="29" width="1" height="1" fill="#aaaa55"/>
<rect x="274" y="29" width="1" height="1" fill="#aaaa55"/>
<rect x="278" y="30" width="1" height="1" fill="#aaaa55"/>
<rect x="282" y="31" width="1" height="1" fill="#aaaa55"/>
<rect x="286" y="32" width="1" height="1" fill="#aaaa55"/>
<rect x="290" y="32" width="1" height="1" fill="#aaaa55"/>
<rect x="294" y="33" width="1" height="1" fill="#aaaa55"/>
<rect x="298" y="34" width="1" height="1" fill="#aaaa55"/>
<path d="M142,38 Q142.5,35 146,34.5 L151,33.5 L151,45 L147,46 Q142.5,45 142,42 Z" fill="#5555ff"/>
<path d="M307,38 Q306.5,35 303,34.5 L298,33.5 L298,45 L302,46 Q306.5,45 307,42 Z" fill="#5555ff"/>
<line x1="147.2" y1="77.3" x2="131.2" y2="78.1" stroke="#55ff55" stroke-width="1"/>
<ellipse cx="135.2" cy="78.1" rx="1.7" ry="1.3" fill="#55ff55"/>
<rect x="144" y="76" width="1" height="3" fill="#55ff55"/>
<line x1="148.8" y1="76.0" x2="133.1" y2="76.8" stroke="#55ff55" stroke-width="1"/>
<ellipse cx="137.1" cy="76.8" rx="1.7" ry="1.3" fill="#55ff55"/>
<rect x="145" y="74" width="1" height="3" fill="#55ff55"/>
<line x1="151.9" y1="74.7" x2="136.8" y2="75.4" stroke="#55ff55" stroke-width="1"/>
<ellipse cx="140.7" cy="75.4" rx="1.7" ry="1.3" fill="#55ff55"/>
<rect x="148" y="73" width="1" height="3" fill="#55ff55"/>
<line x1="156.5" y1="73.4" x2="142.2" y2="74.1" stroke="#55ff55" stroke-width="1"/>
<ellipse cx="146.0" cy="74.1" rx="1.7" ry="1.3" fill="#55ff55"/>
<rect x="153" y="72" width="1" height="3" fill="#55ff55"/>
<line x1="162.5" y1="72.3" x2="149.3" y2="72.9" stroke="#55ff55" stroke-width="1"/>
<ellipse cx="152.9" cy="72.9" rx="1.7" ry="1.3" fill="#55ff55"/>
<rect x="159" y="71" width="1" height="3" fill="#55ff55"/>
<line x1="169.7" y1="71.3" x2="157.8" y2="71.8" stroke="#55ff55" stroke-width="1"/>
<ellipse cx="161.2" cy="71.8" rx="1.7" ry="1.3" fill="#55ff55"/>
<rect x="166" y="70" width="1" height="3" fill="#55ff55"/>
<line x1="178.1" y1="70.4" x2="167.7" y2="70.9" stroke="#55ff55" stroke-width="1"/>
<ellipse cx="170.9" cy="70.9" rx="1.7" ry="1.3" fill="#55ff55"/>
<rect x="175" y="69" width="1" height="3" fill="#55ff55"/>
<line x1="187.4" y1="69.7" x2="178.7" y2="70.0" stroke="#55ff55" stroke-width="1"/>
<ellipse cx="181.6" cy="70.0" rx="1.7" ry="1.3" fill="#55ff55"/>
<rect x="184" y="68" width="1" height="3" fill="#55ff55"/>
<line x1="197.4" y1="69.1" x2="190.5" y2="69.4" stroke="#55ff55" stroke-width="1"/>
<ellipse cx="193.2" cy="69.4" rx="1.7" ry="1.3" fill="#55ff55"/>
<rect x="194" y="68" width="1" height="3" fill="#55ff55"/>
<ellipse cx="207.4" cy="68.7" rx="1.2" ry="2.4" fill="#55ff55" transform="rotate(-40.0 207.4 68.7)"/>
<ellipse cx="218.8" cy="68.5" rx="1.2" ry="2.4" fill="#55ff55" transform="rotate(-40.0 218.8 68.5)"/>
<ellipse cx="230.2" cy="68.5" rx="1.2" ry="2.4" fill="#55ff55" transform="rotate(40.0 230.2 68.5)"/>
<ellipse cx="241.6" cy="68.7" rx="1.2" ry="2.4" fill="#55ff55" transform="rotate(40.0 241.6 68.7)"/>
<line x1="251.6" y1="69.1" x2="258.5" y2="69.4" stroke="#55ff55" stroke-width="1"/>
<ellipse cx="255.8" cy="69.4" rx="1.7" ry="1.3" fill="#55ff55"/>
<rect x="254" y="68" width="1" height="3" fill="#55ff55"/>
<line x1="261.6" y1="69.7" x2="270.3" y2="70.0" stroke="#55ff55" stroke-width="1"/>
<ellipse cx="267.4" cy="70.0" rx="1.7" ry="1.3" fill="#55ff55"/>
<rect x="264" y="68" width="1" height="3" fill="#55ff55"/>
<line x1="270.9" y1="70.4" x2="281.3" y2="70.9" stroke="#55ff55" stroke-width="1"/>
<ellipse cx="278.1" cy="70.9" rx="1.7" ry="1.3" fill="#55ff55"/>
<rect x="273" y="69" width="1" height="3" fill="#55ff55"/>
<line x1="279.3" y1="71.3" x2="291.2" y2="71.8" stroke="#55ff55" stroke-width="1"/>
<ellipse cx="287.8" cy="71.8" rx="1.7" ry="1.3" fill="#55ff55"/>
<rect x="282" y="70" width="1" height="3" fill="#55ff55"/>
<line x1="286.5" y1="72.3" x2="299.7" y2="72.9" stroke="#55ff55" stroke-width="1"/>
<ellipse cx="296.1" cy="72.9" rx="1.7" ry="1.3" fill="#55ff55"/>
<rect x="289" y="71" width="1" height="3" fill="#55ff55"/>
<line x1="292.5" y1="73.4" x2="306.8" y2="74.1" stroke="#55ff55" stroke-width="1"/>
<ellipse cx="303.0" cy="74.1" rx="1.7" ry="1.3" fill="#55ff55"/>
<rect x="295" y="72" width="1" height="3" fill="#55ff55"/>
<line x1="297.1" y1="74.7" x2="312.2" y2="75.4" stroke="#55ff55" stroke-width="1"/>
<ellipse cx="308.3" cy="75.4" rx="1.7" ry="1.3" fill="#55ff55"/>
<rect x="300" y="73" width="1" height="3" fill="#55ff55"/>
<line x1="300.2" y1="76.0" x2="315.9" y2="76.8" stroke="#55ff55" stroke-width="1"/>
<ellipse cx="311.9" cy="76.8" rx="1.7" ry="1.3" fill="#55ff55"/>
<rect x="303" y="74" width="1" height="3" fill="#55ff55"/>
<line x1="301.8" y1="77.3" x2="317.8" y2="78.1" stroke="#55ff55" stroke-width="1"/>
<ellipse cx="313.8" cy="78.1" rx="1.7" ry="1.3" fill="#55ff55"/>
<rect x="304" y="76" width="1" height="3" fill="#55ff55"/>
<line x1="147.0" y1="78.7" x2="132.1" y2="79.5" stroke="#55ff55" stroke-width="1"/>
<ellipse cx="136.1" cy="79.5" rx="1.7" ry="1.3" fill="#55ff55"/>
<rect x="144" y="77" width="1" height="3" fill="#55ff55"/>
<line x1="302.0" y1="78.7" x2="316.9" y2="79.5" stroke="#55ff55" stroke-width="1"/>
<ellipse cx="312.9" cy="79.5" rx="1.7" ry="1.3" fill="#55ff55"/>
<rect x="304" y="77" width="1" height="3" fill="#55ff55"/>
<line x1="147.0" y1="92.0" x2="132.0" y2="92.8" stroke="#55ff55" stroke-width="1"/>
<ellipse cx="136.0" cy="92.8" rx="1.7" ry="1.3" fill="#55ff55"/>
<rect x="144" y="90" width="1" height="3" fill="#55ff55"/>
<line x1="150.1" y1="89.5" x2="135.7" y2="90.2" stroke="#55ff55" stroke-width="1"/>
<ellipse cx="139.6" cy="90.2" rx="1.7" ry="1.3" fill="#55ff55"/>
<rect x="147" y="88" width="1" height="3" fill="#55ff55"/>
<line x1="159.3" y1="87.1" x2="146.4" y2="87.8" stroke="#55ff55" stroke-width="1"/>
<ellipse cx="150.1" cy="87.8" rx="1.7" ry="1.3" fill="#55ff55"/>
<rect x="156" y="86" width="1" height="3" fill="#55ff55"/>
<line x1="173.8" y1="85.2" x2="163.2" y2="85.7" stroke="#55ff55" stroke-width="1"/>
<ellipse cx="166.6" cy="85.7" rx="1.7" ry="1.3" fill="#55ff55"/>
<rect x="170" y="84" width="1" height="3" fill="#55ff55"/>
<line x1="192.3" y1="83.8" x2="184.9" y2="84.1" stroke="#55ff55" stroke-width="1"/>
<ellipse cx="187.7" cy="84.1" rx="1.7" ry="1.3" fill="#55ff55"/>
<rect x="189" y="82" width="1" height="3" fill="#55ff55"/>
<ellipse cx="213.0" cy="83.1" rx="1.2" ry="2.4" fill="#55ff55" transform="rotate(-40.0 213.0 83.1)"/>
<ellipse cx="236.0" cy="83.1" rx="1.2" ry="2.4" fill="#55ff55" transform="rotate(40.0 236.0 83.1)"/>
<line x1="256.7" y1="83.8" x2="264.1" y2="84.1" stroke="#55ff55" stroke-width="1"/>
<ellipse cx="261.3" cy="84.1" rx="1.7" ry="1.3" fill="#55ff55"/>
<rect x="259" y="82" width="1" height="3" fill="#55ff55"/>
<line x1="275.2" y1="85.2" x2="285.8" y2="85.7" stroke="#55ff55" stroke-width="1"/>
<ellipse cx="282.4" cy="85.7" rx="1.7" ry="1.3" fill="#55ff55"/>
<rect x="278" y="84" width="1" height="3" fill="#55ff55"/>
<line x1="289.7" y1="87.1" x2="302.6" y2="87.8" stroke="#55ff55" stroke-width="1"/>
<ellipse cx="298.9" cy="87.8" rx="1.7" ry="1.3" fill="#55ff55"/>
<rect x="292" y="86" width="1" height="3" fill="#55ff55"/>
<line x1="298.9" y1="89.5" x2="313.3" y2="90.2" stroke="#55ff55" stroke-width="1"/>
<ellipse cx="309.4" cy="90.2" rx="1.7" ry="1.3" fill="#55ff55"/>
<rect x="301" y="88" width="1" height="3" fill="#55ff55"/>
<line x1="302.0" y1="92.0" x2="317.0" y2="92.8" stroke="#55ff55" stroke-width="1"/>
<ellipse cx="313.0" cy="92.8" rx="1.7" ry="1.3" fill="#55ff55"/>
<rect x="304" y="90" width="1" height="3" fill="#55ff55"/>
<line x1="147.2" y1="91.9" x2="132.2" y2="92.7" stroke="#55ff55" stroke-width="1"/>
<ellipse cx="136.2" cy="92.7" rx="1.7" ry="1.3" fill="#55ff55"/>
<rect x="144" y="90" width="1" height="3" fill="#55ff55"/>
<line x1="301.8" y1="91.9" x2="316.8" y2="92.7" stroke="#55ff55" stroke-width="1"/>
<ellipse cx="312.8" cy="92.7" rx="1.7" ry="1.3" fill="#55ff55"/>
<rect x="304" y="90" width="1" height="3" fill="#55ff55"/>
<line x1="147.0" y1="109.5" x2="132.0" y2="110.3" stroke="#55ff55" stroke-width="1"/>
<ellipse cx="136.0" cy="110.3" rx="1.7" ry="1.3" fill="#55ff55"/>
<rect x="144" y="108" width="1" height="3" fill="#55ff55"/>
<line x1="150.1" y1="107.7" x2="135.7" y2="108.4" stroke="#55ff55" stroke-width="1"/>
<ellipse cx="139.6" cy="108.4" rx="1.7" ry="1.3" fill="#55ff55"/>
<rect x="147" y="106" width="1" height="3" fill="#55ff55"/>
<line x1="159.3" y1="106.0" x2="146.4" y2="106.7" stroke="#55ff55" stroke-width="1"/>
<ellipse cx="150.1" cy="106.7" rx="1.7" ry="1.3" fill="#55ff55"/>
<rect x="156" y="104" width="1" height="3" fill="#55ff55"/>
<line x1="173.8" y1="104.6" x2="163.2" y2="105.1" stroke="#55ff55" stroke-width="1"/>
<ellipse cx="166.6" cy="105.1" rx="1.7" ry="1.3" fill="#55ff55"/>
<rect x="170" y="103" width="1" height="3" fill="#55ff55"/>
<line x1="192.3" y1="103.6" x2="184.9" y2="103.9" stroke="#55ff55" stroke-width="1"/>
<ellipse cx="187.7" cy="103.9" rx="1.7" ry="1.3" fill="#55ff55"/>
<rect x="189" y="102" width="1" height="3" fill="#55ff55"/>
<ellipse cx="213.0" cy="103.1" rx="1.2" ry="2.4" fill="#55ff55" transform="rotate(-40.0 213.0 103.1)"/>
<ellipse cx="236.0" cy="103.1" rx="1.2" ry="2.4" fill="#55ff55" transform="rotate(40.0 236.0 103.1)"/>
<line x1="256.7" y1="103.6" x2="264.1" y2="103.9" stroke="#55ff55" stroke-width="1"/>
<ellipse cx="261.3" cy="103.9" rx="1.7" ry="1.3" fill="#55ff55"/>
<rect x="259" y="102" width="1" height="3" fill="#55ff55"/>
<line x1="275.2" y1="104.6" x2="285.8" y2="105.1" stroke="#55ff55" stroke-width="1"/>
<ellipse cx="282.4" cy="105.1" rx="1.7" ry="1.3" fill="#55ff55"/>
<rect x="278" y="103" width="1" height="3" fill="#55ff55"/>
<line x1="289.7" y1="106.0" x2="302.6" y2="106.7" stroke="#55ff55" stroke-width="1"/>
<ellipse cx="298.9" cy="106.7" rx="1.7" ry="1.3" fill="#55ff55"/>
<rect x="292" y="104" width="1" height="3" fill="#55ff55"/>
<line x1="298.9" y1="107.7" x2="313.3" y2="108.4" stroke="#55ff55" stroke-width="1"/>
<ellipse cx="309.4" cy="108.4" rx="1.7" ry="1.3" fill="#55ff55"/>
<rect x="301" y="106" width="1" height="3" fill="#55ff55"/>
<line x1="302.0" y1="109.5" x2="317.0" y2="110.3" stroke="#55ff55" stroke-width="1"/>
<ellipse cx="313.0" cy="110.3" rx="1.7" ry="1.3" fill="#55ff55"/>
<rect x="304" y="108" width="1" height="3" fill="#55ff55"/>
<line x1="147.2" y1="109.5" x2="132.2" y2="110.3" stroke="#55ff55" stroke-width="1"/>
<ellipse cx="136.2" cy="110.3" rx="1.7" ry="1.3" fill="#55ff55"/>
<rect x="144" y="108" width="1" height="3" fill="#55ff55"/>
<line x1="301.8" y1="109.5" x2="316.8" y2="110.3" stroke="#55ff55" stroke-width="1"/>
<ellipse cx="312.8" cy="110.3" rx="1.7" ry="1.3" fill="#55ff55"/>
<rect x="304" y="108" width="1" height="3" fill="#55ff55"/>
<line x1="147.0" y1="139.0" x2="132.0" y2="139.8" stroke="#55ff55" stroke-width="1"/>
<ellipse cx="136.0" cy="139.8" rx="1.7" ry="1.3" fill="#55ff55"/>
<rect x="144" y="137" width="1" height="3" fill="#55ff55"/>
<line x1="150.1" y1="137.3" x2="135.7" y2="138.1" stroke="#55ff55" stroke-width="1"/>
<ellipse cx="139.6" cy="138.1" rx="1.7" ry="1.3" fill="#55ff55"/>
<rect x="147" y="136" width="1" height="3" fill="#55ff55"/>
<line x1="159.3" y1="135.8" x2="146.4" y2="136.4" stroke="#55ff55" stroke-width="1"/>
<ellipse cx="150.1" cy="136.4" rx="1.7" ry="1.3" fill="#55ff55"/>
<rect x="156" y="134" width="1" height="3" fill="#55ff55"/>
<line x1="173.8" y1="134.5" x2="163.2" y2="135.0" stroke="#55ff55" stroke-width="1"/>
<ellipse cx="166.6" cy="135.0" rx="1.7" ry="1.3" fill="#55ff55"/>
<rect x="170" y="133" width="1" height="3" fill="#55ff55"/>
<line x1="192.3" y1="133.5" x2="184.9" y2="133.9" stroke="#55ff55" stroke-width="1"/>
<ellipse cx="187.7" cy="133.9" rx="1.7" ry="1.3" fill="#55ff55"/>
<rect x="189" y="132" width="1" height="3" fill="#55ff55"/>
<ellipse cx="213.0" cy="133.1" rx="1.2" ry="2.4" fill="#55ff55" transform="rotate(-40.0 213.0 133.1)"/>
<ellipse cx="236.0" cy="133.1" rx="1.2" ry="2.4" fill="#55ff55" transform="rotate(40.0 236.0 133.1)"/>
<line x1="256.7" y1="133.5" x2="264.1" y2="133.9" stroke="#55ff55" stroke-width="1"/>
<ellipse cx="261.3" cy="133.9" rx="1.7" ry="1.3" fill="#55ff55"/>
<rect x="259" y="132" width="1" height="3" fill="#55ff55"/>
<line x1="275.2" y1="134.5" x2="285.8" y2="135.0" stroke="#55ff55" stroke-width="1"/>
<ellipse cx="282.4" cy="135.0" rx="1.7" ry="1.3" fill="#55ff55"/>
<rect x="278" y="133" width="1" height="3" fill="#55ff55"/>
<line x1="289.7" y1="135.8" x2="302.6" y2="136.4" stroke="#55ff55" stroke-width="1"/>
<ellipse cx="298.9" cy="136.4" rx="1.7" ry="1.3" fill="#55ff55"/>
<rect x="292" y="134" width="1" height="3" fill="#55ff55"/>
<line x1="298.9" y1="137.3" x2="313.3" y2="138.1" stroke="#55ff55" stroke-width="1"/>
<ellipse cx="309.4" cy="138.1" rx="1.7" ry="1.3" fill="#55ff55"/>
<rect x="301" y="136" width="1" height="3" fill="#55ff55"/>
<line x1="302.0" y1="139.0" x2="317.0" y2="139.8" stroke="#55ff55" stroke-width="1"/>
<ellipse cx="313.0" cy="139.8" rx="1.7" ry="1.3" fill="#55ff55"/>
<rect x="304" y="137" width="1" height="3" fill="#55ff55"/>
<line x1="147.2" y1="139.1" x2="127.2" y2="139.9" stroke="#55ff55" stroke-width="1"/>
<ellipse cx="131.2" cy="139.9" rx="1.7" ry="1.3" fill="#55ff55"/>
<rect x="144" y="138" width="1" height="3" fill="#55ff55"/>
<line x1="301.8" y1="139.1" x2="321.8" y2="139.9" stroke="#55ff55" stroke-width="1"/>
<ellipse cx="317.8" cy="139.9" rx="1.7" ry="1.3" fill="#55ff55"/>
<rect x="304" y="138" width="1" height="3" fill="#55ff55"/>
<line x1="147.0" y1="162.0" x2="132.0" y2="162.8" stroke="#55ff55" stroke-width="1"/>
<ellipse cx="136.0" cy="162.8" rx="1.7" ry="1.3" fill="#55ff55"/>
<rect x="144" y="160" width="1" height="3" fill="#55ff55"/>
<line x1="150.1" y1="160.6" x2="135.7" y2="161.4" stroke="#55ff55" stroke-width="1"/>
<ellipse cx="139.6" cy="161.4" rx="1.7" ry="1.3" fill="#55ff55"/>
<rect x="147" y="159" width="1" height="3" fill="#55ff55"/>
<line x1="159.3" y1="159.3" x2="146.4" y2="160.0" stroke="#55ff55" stroke-width="1"/>
<ellipse cx="150.1" cy="160.0" rx="1.7" ry="1.3" fill="#55ff55"/>
<rect x="156" y="158" width="1" height="3" fill="#55ff55"/>
<line x1="173.8" y1="158.2" x2="163.2" y2="158.7" stroke="#55ff55" stroke-width="1"/>
<ellipse cx="166.6" cy="158.7" rx="1.7" ry="1.3" fill="#55ff55"/>
<rect x="170" y="157" width="1" height="3" fill="#55ff55"/>
<line x1="192.3" y1="157.5" x2="184.9" y2="157.8" stroke="#55ff55" stroke-width="1"/>
<ellipse cx="187.7" cy="157.8" rx="1.7" ry="1.3" fill="#55ff55"/>
<rect x="189" y="156" width="1" height="3" fill="#55ff55"/>
<ellipse cx="213.0" cy="157.1" rx="1.2" ry="2.4" fill="#55ff55" transform="rotate(-40.0 213.0 157.1)"/>
<ellipse cx="236.0" cy="157.1" rx="1.2" ry="2.4" fill="#55ff55" transform="rotate(40.0 236.0 157.1)"/>
<line x1="256.7" y1="157.5" x2="264.1" y2="157.8" stroke="#55ff55" stroke-width="1"/>
<ellipse cx="261.3" cy="157.8" rx="1.7" ry="1.3" fill="#55ff55"/>
<rect x="259" y="156" width="1" height="3" fill="#55ff55"/>
<line x1="275.2" y1="158.2" x2="285.8" y2="158.7" stroke="#55ff55" stroke-width="1"/>
<ellipse cx="282.4" cy="158.7" rx="1.7" ry="1.3" fill="#55ff55"/>
<rect x="278" y="157" width="1" height="3" fill="#55ff55"/>
<line x1="289.7" y1="159.3" x2="302.6" y2="160.0" stroke="#55ff55" stroke-width="1"/>
<ellipse cx="298.9" cy="160.0" rx="1.7" ry="1.3" fill="#55ff55"/>
<rect x="292" y="158" width="1" height="3" fill="#55ff55"/>
<line x1="298.9" y1="160.6" x2="313.3" y2="161.4" stroke="#55ff55" stroke-width="1"/>
<ellipse cx="309.4" cy="161.4" rx="1.7" ry="1.3" fill="#55ff55"/>
<rect x="301" y="159" width="1" height="3" fill="#55ff55"/>
<line x1="302.0" y1="162.0" x2="317.0" y2="162.8" stroke="#55ff55" stroke-width="1"/>
<ellipse cx="313.0" cy="162.8" rx="1.7" ry="1.3" fill="#55ff55"/>
<rect x="304" y="160" width="1" height="3" fill="#55ff55"/>
<line x1="147.2" y1="162.2" x2="123.2" y2="162.9" stroke="#55ff55" stroke-width="1"/>
<ellipse cx="127.2" cy="162.9" rx="1.7" ry="1.3" fill="#55ff55"/>
<rect x="144" y="161" width="1" height="3" fill="#55ff55"/>
<line x1="301.8" y1="162.2" x2="325.8" y2="162.9" stroke="#55ff55" stroke-width="1"/>
<ellipse cx="321.8" cy="162.9" rx="1.7" ry="1.3" fill="#55ff55"/>
<rect x="304" y="161" width="1" height="3" fill="#55ff55"/>
<polygon points="196.0,218.0 166.1,221.2 146.8,226.7 166.8,225.2" fill="#55ff55"/>
<polygon points="202.0,218.0 172.5,228.3 154.1,238.3 174.1,232.0" fill="#55ff55"/>
<polygon points="208.0,218.0 182.6,234.0 167.5,247.4 184.9,237.3" fill="#55ff55"/>
<polygon points="213.0,218.0 192.6,238.4 181.5,254.2 195.6,241.0" fill="#55ff55"/>
<polygon points="218.0,218.0 203.3,241.4 196.4,258.6 206.8,243.3" fill="#55ff55"/>
<polygon points="222.0,218.0 213.7,243.1 211.4,260.7 217.6,244.1" fill="#55ff55"/>
<line x1="191.4" y1="211.5" x2="149.7" y2="256.2" stroke="#55ff55" stroke-width="1"/>
<polygon points="149.7,256.2 157.6,243.2 162.2,247.4" fill="#55ff55"/>
<line x1="196.8" y1="210.4" x2="148.3" y2="257.5" stroke="#55ff55" stroke-width="1"/>
<polygon points="148.3,257.5 157.9,244.9 161.1,248.2" fill="#55ff55"/>
<line x1="199.6" y1="220.0" x2="147.2" y2="260.7" stroke="#55ff55" stroke-width="1"/>
<polygon points="147.2,260.7 155.3,251.4 158.2,255.3" fill="#55ff55"/>
<line x1="206.8" y1="218.5" x2="150.6" y2="262.8" stroke="#55ff55" stroke-width="1"/>
<polygon points="150.6,262.8 161.1,251.5 164.0,255.2" fill="#55ff55"/>
<line x1="196.9" y1="233.8" x2="146.6" y2="265.8" stroke="#55ff55" stroke-width="1"/>
<polygon points="146.6,265.8 156.2,256.9 158.8,261.0" fill="#55ff55"/>
<line x1="195.2" y1="232.3" x2="150.4" y2="269.0" stroke="#55ff55" stroke-width="1"/>
<polygon points="150.4,269.0 159.5,257.8 163.1,262.2" fill="#55ff55"/>
<line x1="194.0" y1="226.8" x2="150.7" y2="269.8" stroke="#55ff55" stroke-width="1"/>
<polygon points="150.7,269.8 160.0,257.1 163.5,260.6" fill="#55ff55"/>
<line x1="210.4" y1="238.2" x2="146.8" y2="272.5" stroke="#55ff55" stroke-width="1"/>
<polygon points="146.8,272.5 157.1,263.8 159.8,268.7" fill="#55ff55"/>
<line x1="206.4" y1="236.8" x2="149.4" y2="274.2" stroke="#55ff55" stroke-width="1"/>
<polygon points="149.4,274.2 160.7,263.6 163.6,268.1" fill="#55ff55"/>
<line x1="210.1" y1="234.0" x2="148.4" y2="277.2" stroke="#55ff55" stroke-width="1"/>
<polygon points="148.4,277.2 160.1,266.3 162.7,269.9" fill="#55ff55"/>
<line x1="200.9" y1="248.2" x2="150.2" y2="280.5" stroke="#55ff55" stroke-width="1"/>
<polygon points="150.2,280.5 160.1,270.9 163.1,275.6" fill="#55ff55"/>
<line x1="198.1" y1="246.5" x2="146.2" y2="281.4" stroke="#55ff55" stroke-width="1"/>
<polygon points="146.2,281.4 155.2,271.8 158.5,276.7" fill="#55ff55"/>
<line x1="207.2" y1="248.1" x2="150.7" y2="285.7" stroke="#55ff55" stroke-width="1"/>
<polygon points="150.7,285.7 160.8,275.4 164.1,280.3" fill="#55ff55"/>
<line x1="198.6" y1="241.7" x2="149.7" y2="286.4" stroke="#55ff55" stroke-width="1"/>
<polygon points="149.7,286.4 156.6,275.9 160.8,280.5" fill="#55ff55"/>
<line x1="198.7" y1="247.0" x2="147.7" y2="288.8" stroke="#55ff55" stroke-width="1"/>
<polygon points="147.7,288.8 156.1,277.9 160.0,282.7" fill="#55ff55"/>
<line x1="210.5" y1="255.0" x2="147.6" y2="292.1" stroke="#55ff55" stroke-width="1"/>
<polygon points="147.6,292.1 157.0,283.8 159.4,287.9" fill="#55ff55"/>
<line x1="212.8" y1="260.2" x2="151.0" y2="294.8" stroke="#55ff55" stroke-width="1"/>
<polygon points="151.0,294.8 163.6,284.6 166.2,289.4" fill="#55ff55"/>
<line x1="201.6" y1="255.1" x2="147.2" y2="296.6" stroke="#55ff55" stroke-width="1"/>
<polygon points="147.2,296.6 156.6,286.1 159.8,290.3" fill="#55ff55"/>
<line x1="207.8" y1="265.8" x2="150.6" y2="298.3" stroke="#55ff55" stroke-width="1"/>
<polygon points="150.6,298.3 162.8,288.7 165.1,292.8" fill="#55ff55"/>
<line x1="203.0" y1="260.0" x2="150.7" y2="302.1" stroke="#55ff55" stroke-width="1"/>
<polygon points="150.7,302.1 158.8,292.2 162.1,296.3" fill="#55ff55"/>
<line x1="208.4" y1="266.6" x2="150.2" y2="303.3" stroke="#55ff55" stroke-width="1"/>
<polygon points="150.2,303.3 162.1,292.2 165.4,297.3" fill="#55ff55"/>
<line x1="205.2" y1="267.5" x2="148.3" y2="307.4" stroke="#55ff55" stroke-width="1"/>
<polygon points="148.3,307.4 158.2,297.3 161.1,301.4" fill="#55ff55"/>
<line x1="202.7" y1="270.6" x2="146.7" y2="308.6" stroke="#55ff55" stroke-width="1"/>
<polygon points="146.7,308.6 158.2,297.4 161.4,302.0" fill="#55ff55"/>
<line x1="212.2" y1="277.8" x2="147.7" y2="311.2" stroke="#55ff55" stroke-width="1"/>
<polygon points="147.7,311.2 159.7,301.5 162.5,307.0" fill="#55ff55"/>
<line x1="205.9" y1="268.9" x2="149.9" y2="313.3" stroke="#55ff55" stroke-width="1"/>
<polygon points="149.9,313.3 159.6,301.9 163.3,306.5" fill="#55ff55"/>
<line x1="210.1" y1="279.2" x2="149.5" y2="315.7" stroke="#55ff55" stroke-width="1"/>
<polygon points="149.5,315.7 160.9,305.5 163.9,310.4" fill="#55ff55"/>
<line x1="208.4" y1="275.6" x2="150.7" y2="318.0" stroke="#55ff55" stroke-width="1"/>
<polygon points="150.7,318.0 158.8,308.6 162.1,313.1" fill="#55ff55"/>
<line x1="206.9" y1="280.9" x2="149.4" y2="320.3" stroke="#55ff55" stroke-width="1"/>
<polygon points="149.4,320.3 159.7,309.6 163.1,314.5" fill="#55ff55"/>
<line x1="206.4" y1="279.1" x2="149.2" y2="322.9" stroke="#55ff55" stroke-width="1"/>
<polygon points="149.2,322.9 158.0,312.3 161.7,317.2" fill="#55ff55"/>
<line x1="204.9" y1="278.7" x2="149.4" y2="326.3" stroke="#55ff55" stroke-width="1"/>
<polygon points="149.4,326.3 158.3,315.1 161.9,319.2" fill="#55ff55"/>
<line x1="210.4" y1="280.3" x2="150.2" y2="327.3" stroke="#55ff55" stroke-width="1"/>
<polygon points="150.2,327.3 160.0,315.9 163.6,320.5" fill="#55ff55"/>
<line x1="210.3" y1="286.4" x2="146.9" y2="330.9" stroke="#55ff55" stroke-width="1"/>
<polygon points="146.9,330.9 157.4,320.3 160.4,324.6" fill="#55ff55"/>
<line x1="209.8" y1="290.9" x2="149.9" y2="333.0" stroke="#55ff55" stroke-width="1"/>
<polygon points="149.9,333.0 158.4,324.1 161.1,328.0" fill="#55ff55"/>
<line x1="211.8" y1="299.6" x2="149.3" y2="335.1" stroke="#55ff55" stroke-width="1"/>
<polygon points="149.3,335.1 160.8,326.0 163.0,329.9" fill="#55ff55"/>
<line x1="210.1" y1="214.0" x2="183.8" y2="232.8" stroke="#55ff55" stroke-width="1"/>
<line x1="220.2" y1="218.8" x2="179.7" y2="241.5" stroke="#55ff55" stroke-width="1"/>
<line x1="218.6" y1="223.6" x2="192.4" y2="243.0" stroke="#55ff55" stroke-width="1"/>
<line x1="213.8" y1="228.4" x2="166.5" y2="266.2" stroke="#55ff55" stroke-width="1"/>
<line x1="217.8" y1="233.2" x2="153.4" y2="265.0" stroke="#55ff55" stroke-width="1"/>
<line x1="213.8" y1="238.0" x2="181.5" y2="263.2" stroke="#55ff55" stroke-width="1"/>
<line x1="221.2" y1="242.8" x2="156.6" y2="282.0" stroke="#55ff55" stroke-width="1"/>
<line x1="223.2" y1="247.6" x2="166.4" y2="275.4" stroke="#55ff55" stroke-width="1"/>
<line x1="211.7" y1="252.4" x2="178.7" y2="282.0" stroke="#55ff55" stroke-width="1"/>
<line x1="203.2" y1="257.2" x2="157.2" y2="297.1" stroke="#55ff55" stroke-width="1"/>
<line x1="207.1" y1="262.0" x2="165.1" y2="296.1" stroke="#55ff55" stroke-width="1"/>
<line x1="221.2" y1="266.8" x2="167.2" y2="303.6" stroke="#55ff55" stroke-width="1"/>
<line x1="206.0" y1="271.6" x2="150.4" y2="320.4" stroke="#55ff55" stroke-width="1"/>
<line x1="217.7" y1="276.4" x2="153.8" y2="308.0" stroke="#55ff55" stroke-width="1"/>
<line x1="222.2" y1="281.2" x2="168.5" y2="318.1" stroke="#55ff55" stroke-width="1"/>
<line x1="221.8" y1="286.0" x2="165.7" y2="330.4" stroke="#55ff55" stroke-width="1"/>
<line x1="218.4" y1="290.8" x2="174.6" y2="317.0" stroke="#55ff55" stroke-width="1"/>
<line x1="219.9" y1="295.6" x2="150.2" y2="338.6" stroke="#55ff55" stroke-width="1"/>
<line x1="211.5" y1="300.4" x2="152.9" y2="345.0" stroke="#55ff55" stroke-width="1"/>
<line x1="220.9" y1="305.2" x2="149.9" y2="345.0" stroke="#55ff55" stroke-width="1"/>
<line x1="173.0" y1="268.0" x2="182.8" y2="258.9" stroke="#55ff55" stroke-width="1"/>
<line x1="173.0" y1="268.0" x2="185.8" y2="264.2" stroke="#55ff55" stroke-width="1"/>
<line x1="222.0" y1="240.0" x2="173.0" y2="268.0" stroke="#55ff55" stroke-width="1"/>
<line x1="171.8" y1="276.0" x2="181.7" y2="267.0" stroke="#55ff55" stroke-width="1"/>
<line x1="171.8" y1="276.0" x2="184.6" y2="272.3" stroke="#55ff55" stroke-width="1"/>
<line x1="222.0" y1="248.0" x2="171.8" y2="276.0" stroke="#55ff55" stroke-width="1"/>
<line x1="179.8" y1="284.0" x2="189.0" y2="274.3" stroke="#55ff55" stroke-width="1"/>
<line x1="179.8" y1="284.0" x2="192.3" y2="279.3" stroke="#55ff55" stroke-width="1"/>
<line x1="222.0" y1="256.0" x2="179.8" y2="284.0" stroke="#55ff55" stroke-width="1"/>
<line x1="173.9" y1="292.0" x2="183.6" y2="282.9" stroke="#55ff55" stroke-width="1"/>
<line x1="173.9" y1="292.0" x2="186.6" y2="288.1" stroke="#55ff55" stroke-width="1"/>
<line x1="222.0" y1="264.0" x2="173.9" y2="292.0" stroke="#55ff55" stroke-width="1"/>
<line x1="171.4" y1="300.0" x2="181.4" y2="291.1" stroke="#55ff55" stroke-width="1"/>
<line x1="171.4" y1="300.0" x2="184.3" y2="296.3" stroke="#55ff55" stroke-width="1"/>
<line x1="222.0" y1="272.0" x2="171.4" y2="300.0" stroke="#55ff55" stroke-width="1"/>
<line x1="173.7" y1="308.0" x2="183.5" y2="298.9" stroke="#55ff55" stroke-width="1"/>
<line x1="173.7" y1="308.0" x2="186.5" y2="304.1" stroke="#55ff55" stroke-width="1"/>
<line x1="222.0" y1="280.0" x2="173.7" y2="308.0" stroke="#55ff55" stroke-width="1"/>
<line x1="169.5" y1="316.0" x2="179.5" y2="307.2" stroke="#55ff55" stroke-width="1"/>
<line x1="169.5" y1="316.0" x2="182.3" y2="312.5" stroke="#55ff55" stroke-width="1"/>
<line x1="222.0" y1="288.0" x2="169.5" y2="316.0" stroke="#55ff55" stroke-width="1"/>
<line x1="175.5" y1="324.0" x2="185.1" y2="314.7" stroke="#55ff55" stroke-width="1"/>
<line x1="175.5" y1="324.0" x2="188.1" y2="319.9" stroke="#55ff55" stroke-width="1"/>
<line x1="222.0" y1="296.0" x2="175.5" y2="324.0" stroke="#55ff55" stroke-width="1"/>
<line x1="173.3" y1="332.0" x2="183.1" y2="322.9" stroke="#55ff55" stroke-width="1"/>
<line x1="173.3" y1="332.0" x2="186.1" y2="328.1" stroke="#55ff55" stroke-width="1"/>
<line x1="222.0" y1="304.0" x2="173.3" y2="332.0" stroke="#55ff55" stroke-width="1"/>
<line x1="214.6" y1="220.8" x2="204.7" y2="254.7" stroke="#55ff55" stroke-width="1"/>
<line x1="207.0" y1="215.7" x2="198.9" y2="265.7" stroke="#55ff55" stroke-width="1"/>
<line x1="216.1" y1="215.7" x2="168.7" y2="243.1" stroke="#55ff55" stroke-width="1"/>
<line x1="214.6" y1="219.1" x2="184.4" y2="256.2" stroke="#55ff55" stroke-width="1"/>
<line x1="204.7" y1="220.4" x2="160.2" y2="243.8" stroke="#55ff55" stroke-width="1"/>
<line x1="214.4" y1="218.3" x2="183.9" y2="245.6" stroke="#55ff55" stroke-width="1"/>
<line x1="207.0" y1="217.6" x2="170.8" y2="252.0" stroke="#55ff55" stroke-width="1"/>
<line x1="205.1" y1="213.4" x2="169.6" y2="239.5" stroke="#55ff55" stroke-width="1"/>
<line x1="194.7" y1="221.9" x2="174.7" y2="251.0" stroke="#55ff55" stroke-width="1"/>
<line x1="199.1" y1="217.3" x2="172.6" y2="258.7" stroke="#55ff55" stroke-width="1"/>
<line x1="203.8" y1="217.8" x2="195.8" y2="259.8" stroke="#55ff55" stroke-width="1"/>
<line x1="211.5" y1="221.5" x2="177.0" y2="243.7" stroke="#55ff55" stroke-width="1"/>
<polygon points="221.0,222.0 213.6,243.5 210.0,266.0 217.4,244.5" fill="#55ff55"/>
<polygon points="224.0,222.0 221.0,244.9 222.0,268.0 225.0,245.1" fill="#55ff55"/>
<line x1="187.9" y1="223.3" x2="170.9" y2="232.2" stroke="#55ff55" stroke-width="1"/>
<line x1="188.9" y1="225.3" x2="172.9" y2="234.2" stroke="#55ff55" stroke-width="1"/>
<line x1="190.8" y1="226.3" x2="169.5" y2="238.6" stroke="#55ff55" stroke-width="1"/>
<line x1="191.8" y1="228.3" x2="171.5" y2="240.6" stroke="#55ff55" stroke-width="1"/>
<line x1="193.5" y1="229.8" x2="163.7" y2="243.9" stroke="#55ff55" stroke-width="1"/>
<line x1="194.5" y1="231.8" x2="165.7" y2="245.9" stroke="#55ff55" stroke-width="1"/>
<line x1="191.4" y1="235.1" x2="164.6" y2="249.9" stroke="#55ff55" stroke-width="1"/>
<line x1="192.4" y1="237.1" x2="166.6" y2="251.9" stroke="#55ff55" stroke-width="1"/>
<line x1="193.0" y1="238.7" x2="170.5" y2="251.0" stroke="#55ff55" stroke-width="1"/>
<line x1="194.0" y1="240.7" x2="172.5" y2="253.0" stroke="#55ff55" stroke-width="1"/>
<line x1="192.5" y1="245.7" x2="168.1" y2="260.2" stroke="#55ff55" stroke-width="1"/>
<line x1="193.5" y1="247.7" x2="170.1" y2="262.2" stroke="#55ff55" stroke-width="1"/>
<line x1="200.6" y1="251.6" x2="151.2" y2="279.3" stroke="#55ff55" stroke-width="1"/>
<line x1="201.6" y1="253.6" x2="153.2" y2="281.3" stroke="#55ff55" stroke-width="1"/>
<line x1="200.4" y1="253.1" x2="173.8" y2="267.1" stroke="#55ff55" stroke-width="1"/>
<line x1="201.4" y1="255.1" x2="175.8" y2="269.1" stroke="#55ff55" stroke-width="1"/>
<line x1="197.9" y1="257.3" x2="172.9" y2="267.0" stroke="#55ff55" stroke-width="1"/>
<line x1="198.9" y1="259.3" x2="174.9" y2="269.0" stroke="#55ff55" stroke-width="1"/>
<line x1="200.6" y1="263.8" x2="154.0" y2="287.4" stroke="#55ff55" stroke-width="1"/>
<line x1="201.6" y1="265.8" x2="156.0" y2="289.4" stroke="#55ff55" stroke-width="1"/>
<line x1="198.1" y1="266.2" x2="159.5" y2="280.4" stroke="#55ff55" stroke-width="1"/>
<line x1="199.1" y1="268.2" x2="161.5" y2="282.4" stroke="#55ff55" stroke-width="1"/>
<line x1="204.0" y1="270.8" x2="168.6" y2="291.0" stroke="#55ff55" stroke-width="1"/>
<line x1="205.0" y1="272.8" x2="170.6" y2="293.0" stroke="#55ff55" stroke-width="1"/>
<line x1="203.8" y1="275.7" x2="157.9" y2="298.7" stroke="#55ff55" stroke-width="1"/>
<line x1="204.8" y1="277.7" x2="159.9" y2="300.7" stroke="#55ff55" stroke-width="1"/>
<line x1="210.4" y1="281.8" x2="159.4" y2="300.3" stroke="#55ff55" stroke-width="1"/>
<line x1="211.4" y1="283.8" x2="161.4" y2="302.3" stroke="#55ff55" stroke-width="1"/>
<line x1="203.9" y1="287.2" x2="165.8" y2="305.4" stroke="#55ff55" stroke-width="1"/>
<line x1="204.9" y1="289.2" x2="167.8" y2="307.4" stroke="#55ff55" stroke-width="1"/>
<line x1="209.4" y1="292.6" x2="165.5" y2="310.9" stroke="#55ff55" stroke-width="1"/>
<line x1="210.4" y1="294.6" x2="167.5" y2="312.9" stroke="#55ff55" stroke-width="1"/>
<line x1="207.2" y1="295.8" x2="168.8" y2="314.2" stroke="#55ff55" stroke-width="1"/>
<line x1="208.2" y1="297.8" x2="170.8" y2="316.2" stroke="#55ff55" stroke-width="1"/>
<line x1="207.7" y1="298.7" x2="159.3" y2="324.6" stroke="#55ff55" stroke-width="1"/>
<line x1="208.7" y1="300.7" x2="161.3" y2="326.6" stroke="#55ff55" stroke-width="1"/>
<line x1="213.7" y1="303.5" x2="166.4" y2="321.1" stroke="#55ff55" stroke-width="1"/>
<line x1="214.7" y1="305.5" x2="168.4" y2="323.1" stroke="#55ff55" stroke-width="1"/>
<line x1="209.2" y1="310.1" x2="153.1" y2="338.0" stroke="#55ff55" stroke-width="1"/>
<line x1="210.2" y1="312.1" x2="155.1" y2="340.0" stroke="#55ff55" stroke-width="1"/>
<line x1="217.3" y1="313.0" x2="162.0" y2="336.8" stroke="#55ff55" stroke-width="1"/>
<line x1="218.3" y1="315.0" x2="164.0" y2="338.8" stroke="#55ff55" stroke-width="1"/>
<line x1="208.8" y1="319.8" x2="168.1" y2="334.6" stroke="#55ff55" stroke-width="1"/>
<line x1="209.8" y1="321.8" x2="170.1" y2="336.6" stroke="#55ff55" stroke-width="1"/>
<line x1="218.0" y1="321.8" x2="167.0" y2="342.0" stroke="#55ff55" stroke-width="1"/>
<line x1="219.0" y1="323.8" x2="169.0" y2="344.0" stroke="#55ff55" stroke-width="1"/>
<line x1="218.2" y1="326.3" x2="166.6" y2="342.0" stroke="#55ff55" stroke-width="1"/>
<line x1="219.2" y1="328.3" x2="168.6" y2="344.0" stroke="#55ff55" stroke-width="1"/>
<polygon points="199.0,230.0 181.3,233.5 170.3,238.8 182.3,237.0" fill="#55ff55"/>
<polygon points="205.0,230.0 188.5,237.4 179.0,245.0 190.3,240.6" fill="#55ff55"/>
<polygon points="210.0,230.0 195.6,241.0 188.1,250.5 198.1,243.6" fill="#55ff55"/>
<polygon points="215.0,230.0 203.4,243.9 198.2,254.9 206.4,245.9" fill="#55ff55"/>
<polygon points="220.0,230.0 211.9,246.2 209.2,258.0 215.2,247.4" fill="#55ff55"/>
<polygon points="223.0,230.0 218.7,247.6 218.8,259.7 222.3,248.1" fill="#55ff55"/>
<polygon points="194.0,334.0 201.5,302.0 206.5,302.0" fill="#55ff55"/>
<line x1="204.0" y1="302.0" x2="222.0" y2="250.0" stroke="#55ff55" stroke-width="1"/>
<line x1="194.0" y1="334.0" x2="210.0" y2="290.0" stroke="#55ff55" stroke-width="1"/>
<polygon points="214.0,334.0 213.5,303.0 218.5,303.0" fill="#55ff55"/>
<line x1="216.0" y1="303.0" x2="222.0" y2="250.0" stroke="#55ff55" stroke-width="1"/>
<line x1="214.0" y1="334.0" x2="222.0" y2="291.0" stroke="#55ff55" stroke-width="1"/>
<polygon points="253.0,218.0 282.9,221.2 302.2,226.7 282.2,225.2" fill="#55ff55"/>
<polygon points="247.0,218.0 276.5,228.3 294.9,238.3 274.9,232.0" fill="#55ff55"/>
<polygon points="241.0,218.0 266.4,234.0 281.5,247.4 264.1,237.3" fill="#55ff55"/>
<polygon points="236.0,218.0 256.4,238.4 267.5,254.2 253.4,241.0" fill="#55ff55"/>
<polygon points="231.0,218.0 245.7,241.4 252.6,258.6 242.2,243.3" fill="#55ff55"/>
<polygon points="227.0,218.0 235.3,243.1 237.6,260.7 231.4,244.1" fill="#55ff55"/>
<line x1="257.6" y1="211.5" x2="299.3" y2="256.2" stroke="#55ff55" stroke-width="1"/>
<polygon points="299.3,256.2 286.8,247.4 291.4,243.2" fill="#55ff55"/>
<line x1="252.2" y1="210.4" x2="300.7" y2="257.5" stroke="#55ff55" stroke-width="1"/>
<polygon points="300.7,257.5 287.9,248.2 291.1,244.9" fill="#55ff55"/>
<line x1="249.4" y1="220.0" x2="301.8" y2="260.7" stroke="#55ff55" stroke-width="1"/>
<polygon points="301.8,260.7 290.8,255.3 293.7,251.4" fill="#55ff55"/>
<line x1="242.2" y1="218.5" x2="298.4" y2="262.8" stroke="#55ff55" stroke-width="1"/>
<polygon points="298.4,262.8 285.0,255.2 287.9,251.5" fill="#55ff55"/>
<line x1="252.1" y1="233.8" x2="302.4" y2="265.8" stroke="#55ff55" stroke-width="1"/>
<polygon points="302.4,265.8 290.2,261.0 292.8,256.9" fill="#55ff55"/>
<line x1="253.8" y1="232.3" x2="298.6" y2="269.0" stroke="#55ff55" stroke-width="1"/>
<polygon points="298.6,269.0 285.9,262.2 289.5,257.8" fill="#55ff55"/>
<line x1="255.0" y1="226.8" x2="298.3" y2="269.8" stroke="#55ff55" stroke-width="1"/>
<polygon points="298.3,269.8 285.5,260.6 289.0,257.1" fill="#55ff55"/>
<line x1="238.6" y1="238.2" x2="302.2" y2="272.5" stroke="#55ff55" stroke-width="1"/>
<polygon points="302.2,272.5 289.2,268.7 291.9,263.8" fill="#55ff55"/>
<line x1="242.6" y1="236.8" x2="299.6" y2="274.2" stroke="#55ff55" stroke-width="1"/>
<polygon points="299.6,274.2 285.4,268.1 288.3,263.6" fill="#55ff55"/>
<line x1="238.9" y1="234.0" x2="300.6" y2="277.2" stroke="#55ff55" stroke-width="1"/>
<polygon points="300.6,277.2 286.3,269.9 288.9,266.3" fill="#55ff55"/>
<line x1="248.1" y1="248.2" x2="298.8" y2="280.5" stroke="#55ff55" stroke-width="1"/>
<polygon points="298.8,280.5 285.9,275.6 288.9,270.9" fill="#55ff55"/>
<line x1="250.9" y1="246.5" x2="302.8" y2="281.4" stroke="#55ff55" stroke-width="1"/>
<polygon points="302.8,281.4 290.5,276.7 293.8,271.8" fill="#55ff55"/>
<line x1="241.8" y1="248.1" x2="298.3" y2="285.7" stroke="#55ff55" stroke-width="1"/>
<polygon points="298.3,285.7 284.9,280.3 288.2,275.4" fill="#55ff55"/>
<line x1="250.4" y1="241.7" x2="299.3" y2="286.4" stroke="#55ff55" stroke-width="1"/>
<polygon points="299.3,286.4 288.2,280.5 292.4,275.9" fill="#55ff55"/>
<line x1="250.3" y1="247.0" x2="301.3" y2="288.8" stroke="#55ff55" stroke-width="1"/>
<polygon points="301.3,288.8 289.0,282.7 292.9,277.9" fill="#55ff55"/>
<line x1="238.5" y1="255.0" x2="301.4" y2="292.1" stroke="#55ff55" stroke-width="1"/>
<polygon points="301.4,292.1 289.6,287.9 292.0,283.8" fill="#55ff55"/>
<line x1="236.2" y1="260.2" x2="298.0" y2="294.8" stroke="#55ff55" stroke-width="1"/>
<polygon points="298.0,294.8 282.8,289.4 285.4,284.6" fill="#55ff55"/>
<line x1="247.4" y1="255.1" x2="301.8" y2="296.6" stroke="#55ff55" stroke-width="1"/>
<polygon points="301.8,296.6 289.2,290.3 292.4,286.1" fill="#55ff55"/>
<line x1="241.2" y1="265.8" x2="298.4" y2="298.3" stroke="#55ff55" stroke-width="1"/>
<polygon points="298.4,298.3 283.9,292.8 286.2,288.7" fill="#55ff55"/>
<line x1="246.0" y1="260.0" x2="298.3" y2="302.1" stroke="#55ff55" stroke-width="1"/>
<polygon points="298.3,302.1 286.9,296.3 290.2,292.2" fill="#55ff55"/>
<line x1="240.6" y1="266.6" x2="298.8" y2="303.3" stroke="#55ff55" stroke-width="1"/>
<polygon points="298.8,303.3 283.6,297.3 286.9,292.2" fill="#55ff55"/>
<line x1="243.8" y1="267.5" x2="300.7" y2="307.4" stroke="#55ff55" stroke-width="1"/>
<polygon points="300.7,307.4 287.9,301.4 290.8,297.3" fill="#55ff55"/>
<line x1="246.3" y1="270.6" x2="302.3" y2="308.6" stroke="#55ff55" stroke-width="1"/>
<polygon points="302.3,308.6 287.6,302.0 290.8,297.4" fill="#55ff55"/>
<line x1="236.8" y1="277.8" x2="301.3" y2="311.2" stroke="#55ff55" stroke-width="1"/>
<polygon points="301.3,311.2 286.5,307.0 289.3,301.5" fill="#55ff55"/>
<line x1="243.1" y1="268.9" x2="299.1" y2="313.3" stroke="#55ff55" stroke-width="1"/>
<polygon points="299.1,313.3 285.7,306.5 289.4,301.9" fill="#55ff55"/>
<line x1="238.9" y1="279.2" x2="299.5" y2="315.7" stroke="#55ff55" stroke-width="1"/>
<polygon points="299.5,315.7 285.1,310.4 288.1,305.5" fill="#55ff55"/>
<line x1="240.6" y1="275.6" x2="298.3" y2="318.0" stroke="#55ff55" stroke-width="1"/>
<polygon points="298.3,318.0 286.9,313.1 290.2,308.6" fill="#55ff55"/>
<line x1="242.1" y1="280.9" x2="299.6" y2="320.3" stroke="#55ff55" stroke-width="1"/>
<polygon points="299.6,320.3 285.9,314.5 289.3,309.6" fill="#55ff55"/>
<line x1="242.6" y1="279.1" x2="299.8" y2="322.9" stroke="#55ff55" stroke-width="1"/>
<polygon points="299.8,322.9 287.3,317.2 291.0,312.3" fill="#55ff55"/>
<line x1="244.1" y1="278.7" x2="299.6" y2="326.3" stroke="#55ff55" stroke-width="1"/>
<polygon points="299.6,326.3 287.1,319.2 290.7,315.1" fill="#55ff55"/>
<line x1="238.6" y1="280.3" x2="298.8" y2="327.3" stroke="#55ff55" stroke-width="1"/>
<polygon points="298.8,327.3 285.4,320.5 289.0,315.9" fill="#55ff55"/>
<line x1="238.7" y1="286.4" x2="302.1" y2="330.9" stroke="#55ff55" stroke-width="1"/>
<polygon points="302.1,330.9 288.6,324.6 291.6,320.3" fill="#55ff55"/>
<line x1="239.2" y1="290.9" x2="299.1" y2="333.0" stroke="#55ff55" stroke-width="1"/>
<polygon points="299.1,333.0 287.9,328.0 290.6,324.1" fill="#55ff55"/>
<line x1="237.2" y1="299.6" x2="299.7" y2="335.1" stroke="#55ff55" stroke-width="1"/>
<polygon points="299.7,335.1 286.0,329.9 288.2,326.0" fill="#55ff55"/>
<line x1="238.9" y1="214.0" x2="265.2" y2="232.8" stroke="#55ff55" stroke-width="1"/>
<line x1="228.8" y1="218.8" x2="269.3" y2="241.5" stroke="#55ff55" stroke-width="1"/>
<line x1="230.4" y1="223.6" x2="256.6" y2="243.0" stroke="#55ff55" stroke-width="1"/>
<line x1="235.2" y1="228.4" x2="282.5" y2="266.2" stroke="#55ff55" stroke-width="1"/>
<line x1="231.2" y1="233.2" x2="295.6" y2="265.0" stroke="#55ff55" stroke-width="1"/>
<line x1="235.2" y1="238.0" x2="267.5" y2="263.2" stroke="#55ff55" stroke-width="1"/>
<line x1="227.8" y1="242.8" x2="292.4" y2="282.0" stroke="#55ff55" stroke-width="1"/>
<line x1="225.8" y1="247.6" x2="282.6" y2="275.4" stroke="#55ff55" stroke-width="1"/>
<line x1="237.3" y1="252.4" x2="270.3" y2="282.0" stroke="#55ff55" stroke-width="1"/>
<line x1="245.8" y1="257.2" x2="291.8" y2="297.1" stroke="#55ff55" stroke-width="1"/>
<line x1="241.9" y1="262.0" x2="283.9" y2="296.1" stroke="#55ff55" stroke-width="1"/>
<line x1="227.8" y1="266.8" x2="281.8" y2="303.6" stroke="#55ff55" stroke-width="1"/>
<line x1="243.0" y1="271.6" x2="298.6" y2="320.4" stroke="#55ff55" stroke-width="1"/>
<line x1="231.3" y1="276.4" x2="295.2" y2="308.0" stroke="#55ff55" stroke-width="1"/>
<line x1="226.8" y1="281.2" x2="280.5" y2="318.1" stroke="#55ff55" stroke-width="1"/>
<line x1="227.2" y1="286.0" x2="283.3" y2="330.4" stroke="#55ff55" stroke-width="1"/>
<line x1="230.6" y1="290.8" x2="274.4" y2="317.0" stroke="#55ff55" stroke-width="1"/>
<line x1="229.1" y1="295.6" x2="298.8" y2="338.6" stroke="#55ff55" stroke-width="1"/>
<line x1="237.5" y1="300.4" x2="296.1" y2="345.0" stroke="#55ff55" stroke-width="1"/>
<line x1="228.1" y1="305.2" x2="299.1" y2="345.0" stroke="#55ff55" stroke-width="1"/>
<line x1="276.0" y1="268.0" x2="266.2" y2="258.9" stroke="#55ff55" stroke-width="1"/>
<line x1="276.0" y1="268.0" x2="263.2" y2="264.2" stroke="#55ff55" stroke-width="1"/>
<line x1="227.0" y1="240.0" x2="276.0" y2="268.0" stroke="#55ff55" stroke-width="1"/>
<line x1="277.2" y1="276.0" x2="267.3" y2="267.0" stroke="#55ff55" stroke-width="1"/>
<line x1="277.2" y1="276.0" x2="264.4" y2="272.3" stroke="#55ff55" stroke-width="1"/>
<line x1="227.0" y1="248.0" x2="277.2" y2="276.0" stroke="#55ff55" stroke-width="1"/>
<line x1="269.2" y1="284.0" x2="260.0" y2="274.3" stroke="#55ff55" stroke-width="1"/>
<line x1="269.2" y1="284.0" x2="256.7" y2="279.3" stroke="#55ff55" stroke-width="1"/>
<line x1="227.0" y1="256.0" x2="269.2" y2="284.0" stroke="#55ff55" stroke-width="1"/>
<line x1="275.1" y1="292.0" x2="265.4" y2="282.9" stroke="#55ff55" stroke-width="1"/>
<line x1="275.1" y1="292.0" x2="262.4" y2="288.1" stroke="#55ff55" stroke-width="1"/>
<line x1="227.0" y1="264.0" x2="275.1" y2="292.0" stroke="#55ff55" stroke-width="1"/>
<line x1="277.6" y1="300.0" x2="267.6" y2="291.1" stroke="#55ff55" stroke-width="1"/>
<line x1="277.6" y1="300.0" x2="264.7" y2="296.3" stroke="#55ff55" stroke-width="1"/>
<line x1="227.0" y1="272.0" x2="277.6" y2="300.0" stroke="#55ff55" stroke-width="1"/>
<line x1="275.3" y1="308.0" x2="265.5" y2="298.9" stroke="#55ff55" stroke-width="1"/>
<line x1="275.3" y1="308.0" x2="262.5" y2="304.1" stroke="#55ff55" stroke-width="1"/>
<line x1="227.0" y1="280.0" x2="275.3" y2="308.0" stroke="#55ff55" stroke-width="1"/>
<line x1="279.5" y1="316.0" x2="269.5" y2="307.2" stroke="#55ff55" stroke-width="1"/>
<line x1="279.5" y1="316.0" x2="266.7" y2="312.5" stroke="#55ff55" stroke-width="1"/>
<line x1="227.0" y1="288.0" x2="279.5" y2="316.0" stroke="#55ff55" stroke-width="1"/>
<line x1="273.5" y1="324.0" x2="263.9" y2="314.7" stroke="#55ff55" stroke-width="1"/>
<line x1="273.5" y1="324.0" x2="260.9" y2="319.9" stroke="#55ff55" stroke-width="1"/>
<line x1="227.0" y1="296.0" x2="273.5" y2="324.0" stroke="#55ff55" stroke-width="1"/>
<line x1="275.7" y1="332.0" x2="265.9" y2="322.9" stroke="#55ff55" stroke-width="1"/>
<line x1="275.7" y1="332.0" x2="262.9" y2="328.1" stroke="#55ff55" stroke-width="1"/>
<line x1="227.0" y1="304.0" x2="275.7" y2="332.0" stroke="#55ff55" stroke-width="1"/>
<line x1="234.4" y1="220.8" x2="244.3" y2="254.7" stroke="#55ff55" stroke-width="1"/>
<line x1="242.0" y1="215.7" x2="250.1" y2="265.7" stroke="#55ff55" stroke-width="1"/>
<line x1="232.9" y1="215.7" x2="280.3" y2="243.1" stroke="#55ff55" stroke-width="1"/>
<line x1="234.4" y1="219.1" x2="264.6" y2="256.2" stroke="#55ff55" stroke-width="1"/>
<line x1="244.3" y1="220.4" x2="288.8" y2="243.8" stroke="#55ff55" stroke-width="1"/>
<line x1="234.6" y1="218.3" x2="265.1" y2="245.6" stroke="#55ff55" stroke-width="1"/>
<line x1="242.0" y1="217.6" x2="278.2" y2="252.0" stroke="#55ff55" stroke-width="1"/>
<line x1="243.9" y1="213.4" x2="279.4" y2="239.5" stroke="#55ff55" stroke-width="1"/>
<line x1="254.3" y1="221.9" x2="274.3" y2="251.0" stroke="#55ff55" stroke-width="1"/>
<line x1="249.9" y1="217.3" x2="276.4" y2="258.7" stroke="#55ff55" stroke-width="1"/>
<line x1="245.2" y1="217.8" x2="253.2" y2="259.8" stroke="#55ff55" stroke-width="1"/>
<line x1="237.5" y1="221.5" x2="272.0" y2="243.7" stroke="#55ff55" stroke-width="1"/>
<polygon points="228.0,222.0 235.4,243.5 239.0,266.0 231.6,244.5" fill="#55ff55"/>
<polygon points="225.0,222.0 228.0,244.9 227.0,268.0 224.0,245.1" fill="#55ff55"/>
<line x1="261.1" y1="223.3" x2="278.1" y2="232.2" stroke="#55ff55" stroke-width="1"/>
<line x1="260.1" y1="225.3" x2="276.1" y2="234.2" stroke="#55ff55" stroke-width="1"/>
<line x1="258.2" y1="226.3" x2="279.5" y2="238.6" stroke="#55ff55" stroke-width="1"/>
<line x1="257.2" y1="228.3" x2="277.5" y2="240.6" stroke="#55ff55" stroke-width="1"/>
<line x1="255.5" y1="229.8" x2="285.3" y2="243.9" stroke="#55ff55" stroke-width="1"/>
<line x1="254.5" y1="231.8" x2="283.3" y2="245.9" stroke="#55ff55" stroke-width="1"/>
<line x1="257.6" y1="235.1" x2="284.4" y2="249.9" stroke="#55ff55" stroke-width="1"/>
<line x1="256.6" y1="237.1" x2="282.4" y2="251.9" stroke="#55ff55" stroke-width="1"/>
<line x1="256.0" y1="238.7" x2="278.5" y2="251.0" stroke="#55ff55" stroke-width="1"/>
<line x1="255.0" y1="240.7" x2="276.5" y2="253.0" stroke="#55ff55" stroke-width="1"/>
<line x1="256.5" y1="245.7" x2="280.9" y2="260.2" stroke="#55ff55" stroke-width="1"/>
<line x1="255.5" y1="247.7" x2="278.9" y2="262.2" stroke="#55ff55" stroke-width="1"/>
<line x1="248.4" y1="251.6" x2="297.8" y2="279.3" stroke="#55ff55" stroke-width="1"/>
<line x1="247.4" y1="253.6" x2="295.8" y2="281.3" stroke="#55ff55" stroke-width="1"/>
<line x1="248.6" y1="253.1" x2="275.2" y2="267.1" stroke="#55ff55" stroke-width="1"/>
<line x1="247.6" y1="255.1" x2="273.2" y2="269.1" stroke="#55ff55" stroke-width="1"/>
<line x1="251.1" y1="257.3" x2="276.1" y2="267.0" stroke="#55ff55" stroke-width="1"/>
<line x1="250.1" y1="259.3" x2="274.1" y2="269.0" stroke="#55ff55" stroke-width="1"/>
<line x1="248.4" y1="263.8" x2="295.0" y2="287.4" stroke="#55ff55" stroke-width="1"/>
<line x1="247.4" y1="265.8" x2="293.0" y2="289.4" stroke="#55ff55" stroke-width="1"/>
<line x1="250.9" y1="266.2" x2="289.5" y2="280.4" stroke="#55ff55" stroke-width="1"/>
<line x1="249.9" y1="268.2" x2="287.5" y2="282.4" stroke="#55ff55" stroke-width="1"/>
<line x1="245.0" y1="270.8" x2="280.4" y2="291.0" stroke="#55ff55" stroke-width="1"/>
<line x1="244.0" y1="272.8" x2="278.4" y2="293.0" stroke="#55ff55" stroke-width="1"/>
<line x1="245.2" y1="275.7" x2="291.1" y2="298.7" stroke="#55ff55" stroke-width="1"/>
<line x1="244.2" y1="277.7" x2="289.1" y2="300.7" stroke="#55ff55" stroke-width="1"/>
<line x1="238.6" y1="281.8" x2="289.6" y2="300.3" stroke="#55ff55" stroke-width="1"/>
<line x1="237.6" y1="283.8" x2="287.6" y2="302.3" stroke="#55ff55" stroke-width="1"/>
<line x1="245.1" y1="287.2" x2="283.2" y2="305.4" stroke="#55ff55" stroke-width="1"/>
<line x1="244.1" y1="289.2" x2="281.2" y2="307.4" stroke="#55ff55" stroke-width="1"/>
<line x1="239.6" y1="292.6" x2="283.5" y2="310.9" stroke="#55ff55" stroke-width="1"/>
<line x1="238.6" y1="294.6" x2="281.5" y2="312.9" stroke="#55ff55" stroke-width="1"/>
<line x1="241.8" y1="295.8" x2="280.2" y2="314.2" stroke="#55ff55" stroke-width="1"/>
<line x1="240.8" y1="297.8" x2="278.2" y2="316.2" stroke="#55ff55" stroke-width="1"/>
<line x1="241.3" y1="298.7" x2="289.7" y2="324.6" stroke="#55ff55" stroke-width="1"/>
<line x1="240.3" y1="300.7" x2="287.7" y2="326.6" stroke="#55ff55" stroke-width="1"/>
<line x1="235.3" y1="303.5" x2="282.6" y2="321.1" stroke="#55ff55" stroke-width="1"/>
<line x1="234.3" y1="305.5" x2="280.6" y2="323.1" stroke="#55ff55" stroke-width="1"/>
<line x1="239.8" y1="310.1" x2="295.9" y2="338.0" stroke="#55ff55" stroke-width="1"/>
<line x1="238.8" y1="312.1" x2="293.9" y2="340.0" stroke="#55ff55" stroke-width="1"/>
<line x1="231.7" y1="313.0" x2="287.0" y2="336.8" stroke="#55ff55" stroke-width="1"/>
<line x1="230.7" y1="315.0" x2="285.0" y2="338.8" stroke="#55ff55" stroke-width="1"/>
<line x1="240.2" y1="319.8" x2="280.9" y2="334.6" stroke="#55ff55" stroke-width="1"/>
<line x1="239.2" y1="321.8" x2="278.9" y2="336.6" stroke="#55ff55" stroke-width="1"/>
<line x1="231.0" y1="321.8" x2="282.0" y2="342.0" stroke="#55ff55" stroke-width="1"/>
<line x1="230.0" y1="323.8" x2="280.0" y2="344.0" stroke="#55ff55" stroke-width="1"/>
<line x1="230.8" y1="326.3" x2="282.4" y2="342.0" stroke="#55ff55" stroke-width="1"/>
<line x1="229.8" y1="328.3" x2="280.4" y2="344.0" stroke="#55ff55" stroke-width="1"/>
<polygon points="250.0,230.0 267.7,233.5 278.7,238.8 266.7,237.0" fill="#55ff55"/>
<polygon points="244.0,230.0 260.5,237.4 270.0,245.0 258.7,240.6" fill="#55ff55"/>
<polygon points="239.0,230.0 253.4,241.0 260.9,250.5 250.9,243.6" fill="#55ff55"/>
<polygon points="234.0,230.0 245.6,243.9 250.8,254.9 242.6,245.9" fill="#55ff55"/>
<polygon points="229.0,230.0 237.1,246.2 239.8,258.0 233.8,247.4" fill="#55ff55"/>
<polygon points="226.0,230.0 230.3,247.6 230.2,259.7 226.7,248.1" fill="#55ff55"/>
<polygon points="255.0,334.0 247.5,302.0 242.5,302.0" fill="#55ff55"/>
<line x1="245.0" y1="302.0" x2="227.0" y2="250.0" stroke="#55ff55" stroke-width="1"/>
<line x1="255.0" y1="334.0" x2="239.0" y2="290.0" stroke="#55ff55" stroke-width="1"/>
<polygon points="235.0,334.0 235.5,303.0 230.5,303.0" fill="#55ff55"/>
<line x1="233.0" y1="303.0" x2="227.0" y2="250.0" stroke="#55ff55" stroke-width="1"/>
<line x1="235.0" y1="334.0" x2="227.0" y2="291.0" stroke="#55ff55" stroke-width="1"/>
<rect x="199" y="265" width="50" height="1" fill="#5555ff"/>
<rect x="200" y="270" width="47" height="1" fill="#5555ff"/>
<rect x="201" y="275" width="45" height="1" fill="#5555ff"/>
<rect x="203" y="280" width="42" height="1" fill="#5555ff"/>
<rect x="204" y="285" width="40" height="1" fill="#5555ff"/>
<rect x="205" y="290" width="37" height="1" fill="#5555ff"/>
<rect x="206" y="295" width="35" height="1" fill="#5555ff"/>
<rect x="208" y="300" width="32" height="1" fill="#5555ff"/>
<rect x="209" y="305" width="30" height="1" fill="#5555ff"/>
<rect x="210" y="310" width="27" height="1" fill="#5555ff"/>
<line x1="200.8" y1="262.0" x2="214.5" y2="311.0" stroke="#5555ff" stroke-width="1"/>
<line x1="208.3" y1="262.0" x2="217.7" y2="311.0" stroke="#5555ff" stroke-width="1"/>
<line x1="216.9" y1="262.0" x2="221.3" y2="311.0" stroke="#5555ff" stroke-width="1"/>
<line x1="224.5" y1="262.0" x2="224.5" y2="311.0" stroke="#5555ff" stroke-width="1"/>
<line x1="233.1" y1="262.0" x2="228.1" y2="311.0" stroke="#5555ff" stroke-width="1"/>
<line x1="241.6" y1="262.0" x2="231.7" y2="311.0" stroke="#5555ff" stroke-width="1"/>
<line x1="249.2" y1="262.0" x2="234.9" y2="311.0" stroke="#5555ff" stroke-width="1"/>
<polyline points="193.5,240.0 198.5,262.0 211.0,311.0 238.0,311.0 250.5,262.0 255.5,240.0" fill="none" stroke="#5555ff" stroke-width="1"/>
<rect x="143" y="168" width="163" height="1" fill="#5555ff"/>
<rect x="143" y="168" width="7" height="270" fill="url(#cb)"/>
<rect x="143" y="168" width="1" height="270" fill="#5555ff"/>
<rect x="149" y="168" width="1" height="270" fill="#5555ff"/>
<rect x="143" y="437" width="7" height="1" fill="#5555ff"/>
<rect x="180" y="168" width="7" height="282" fill="url(#cb)"/>
<rect x="180" y="168" width="1" height="282" fill="#5555ff"/>
<rect x="186" y="168" width="1" height="282" fill="#5555ff"/>
<rect x="180" y="449" width="7" height="1" fill="#5555ff"/>
<rect x="186" y="168" width="5" height="260" fill="url(#cb)"/>
<rect x="186" y="168" width="1" height="260" fill="#5555ff"/>
<rect x="190" y="168" width="1" height="260" fill="#5555ff"/>
<rect x="186" y="427" width="5" height="1" fill="#5555ff"/>
<rect x="262" y="168" width="7" height="282" fill="url(#cb)"/>
<rect x="262" y="168" width="1" height="282" fill="#5555ff"/>
<rect x="268" y="168" width="1" height="282" fill="#5555ff"/>
<rect x="262" y="449" width="7" height="1" fill="#5555ff"/>
<rect x="258" y="168" width="5" height="260" fill="url(#cb)"/>
<rect x="258" y="168" width="1" height="260" fill="#5555ff"/>
<rect x="262" y="168" width="1" height="260" fill="#5555ff"/>
<rect x="258" y="427" width="5" height="1" fill="#5555ff"/>
<rect x="299" y="168" width="7" height="270" fill="url(#cb)"/>
<rect x="299" y="168" width="1" height="270" fill="#5555ff"/>
<rect x="305" y="168" width="1" height="270" fill="#5555ff"/>
<rect x="299" y="437" width="7" height="1" fill="#5555ff"/>
<polygon points="152.0,170.0 179.0,170.0 165.5,212.0" fill="url(#cb)"/>
<polygon points="179.0,175.2 146.0,255.2 150.0,256.8 183.0,176.8" fill="url(#cb)"/>
<line x1="179.0" y1="175.2" x2="146.0" y2="255.2" stroke="#5555ff" stroke-width="1.5"/>
<line x1="183.0" y1="176.8" x2="150.0" y2="256.8" stroke="#5555ff" stroke-width="1.5"/>
<polygon points="143.0,236.0 180.0,215.0 180.0,252.0 143.0,252.0" fill="#55ff55"/>
<line x1="152.0" y1="232.0" x2="180.0" y2="220.0" stroke="#000" stroke-width="1" stroke-dasharray="3 5"/>
<line x1="154.0" y1="236.0" x2="180.0" y2="225.0" stroke="#000" stroke-width="1" stroke-dasharray="3 5"/>
<line x1="156.0" y1="240.0" x2="180.0" y2="230.0" stroke="#000" stroke-width="1" stroke-dasharray="3 5"/>
<line x1="158.0" y1="244.0" x2="180.0" y2="235.0" stroke="#000" stroke-width="1" stroke-dasharray="3 5"/>
<line x1="160.0" y1="248.0" x2="180.0" y2="240.0" stroke="#000" stroke-width="1" stroke-dasharray="3 5"/>
<line x1="162.0" y1="252.0" x2="180.0" y2="245.0" stroke="#000" stroke-width="1" stroke-dasharray="3 5"/>
<line x1="164.0" y1="256.0" x2="180.0" y2="250.0" stroke="#000" stroke-width="1" stroke-dasharray="3 5"/>
<polygon points="145.9,170.8 178.9,256.8 183.1,255.2 150.1,169.2" fill="url(#cb)"/>
<line x1="145.9" y1="170.8" x2="178.9" y2="256.8" stroke="#5555ff" stroke-width="1.5"/>
<line x1="150.1" y1="169.2" x2="183.1" y2="255.2" stroke="#5555ff" stroke-width="1.5"/>
<polygon points="146.0,262.8 179.0,345.8 183.0,344.2 150.0,261.2" fill="url(#cb)"/>
<line x1="146.0" y1="262.8" x2="179.0" y2="345.8" stroke="#5555ff" stroke-width="1.5"/>
<line x1="150.0" y1="261.2" x2="183.0" y2="344.2" stroke="#5555ff" stroke-width="1.5"/>
<polygon points="179.0,269.1 146.0,344.1 150.0,345.9 183.0,270.9" fill="url(#cb)"/>
<line x1="179.0" y1="269.1" x2="146.0" y2="344.1" stroke="#5555ff" stroke-width="1.5"/>
<line x1="183.0" y1="270.9" x2="150.0" y2="345.9" stroke="#5555ff" stroke-width="1.5"/>
<polygon points="145.0,352.8 181.0,440.8 185.0,439.2 149.0,351.2" fill="url(#cb)"/>
<line x1="145.0" y1="352.8" x2="181.0" y2="440.8" stroke="#5555ff" stroke-width="1.5"/>
<line x1="149.0" y1="351.2" x2="185.0" y2="439.2" stroke="#5555ff" stroke-width="1.5"/>
<polygon points="181.0,355.1 145.0,436.1 149.0,437.9 185.0,356.9" fill="url(#cb)"/>
<line x1="181.0" y1="355.1" x2="145.0" y2="436.1" stroke="#5555ff" stroke-width="1.5"/>
<line x1="185.0" y1="356.9" x2="149.0" y2="437.9" stroke="#5555ff" stroke-width="1.5"/>
<line x1="146.0" y1="258.0" x2="181.0" y2="253.0" stroke="#5555ff" stroke-width="2.5"/>
<line x1="146.0" y1="258.0" x2="181.0" y2="263.0" stroke="#5555ff" stroke-width="2.5"/>
<line x1="146.0" y1="348.0" x2="181.0" y2="343.0" stroke="#5555ff" stroke-width="2.5"/>
<line x1="146.0" y1="348.0" x2="181.0" y2="353.0" stroke="#5555ff" stroke-width="2.5"/>
<polygon points="297.0,170.0 270.0,170.0 283.5,212.0" fill="url(#cb)"/>
<polygon points="266.0,176.8 299.0,256.8 303.0,255.2 270.0,175.2" fill="url(#cb)"/>
<line x1="266.0" y1="176.8" x2="299.0" y2="256.8" stroke="#5555ff" stroke-width="1.5"/>
<line x1="270.0" y1="175.2" x2="303.0" y2="255.2" stroke="#5555ff" stroke-width="1.5"/>
<polygon points="306.0,236.0 269.0,215.0 269.0,252.0 306.0,252.0" fill="#55ff55"/>
<line x1="297.0" y1="232.0" x2="269.0" y2="220.0" stroke="#000" stroke-width="1" stroke-dasharray="3 5"/>
<line x1="295.0" y1="236.0" x2="269.0" y2="225.0" stroke="#000" stroke-width="1" stroke-dasharray="3 5"/>
<line x1="293.0" y1="240.0" x2="269.0" y2="230.0" stroke="#000" stroke-width="1" stroke-dasharray="3 5"/>
<line x1="291.0" y1="244.0" x2="269.0" y2="235.0" stroke="#000" stroke-width="1" stroke-dasharray="3 5"/>
<line x1="289.0" y1="248.0" x2="269.0" y2="240.0" stroke="#000" stroke-width="1" stroke-dasharray="3 5"/>
<line x1="287.0" y1="252.0" x2="269.0" y2="245.0" stroke="#000" stroke-width="1" stroke-dasharray="3 5"/>
<line x1="285.0" y1="256.0" x2="269.0" y2="250.0" stroke="#000" stroke-width="1" stroke-dasharray="3 5"/>
<polygon points="298.9,169.2 265.9,255.2 270.1,256.8 303.1,170.8" fill="url(#cb)"/>
<line x1="298.9" y1="169.2" x2="265.9" y2="255.2" stroke="#5555ff" stroke-width="1.5"/>
<line x1="303.1" y1="170.8" x2="270.1" y2="256.8" stroke="#5555ff" stroke-width="1.5"/>
<polygon points="299.0,261.2 266.0,344.2 270.0,345.8 303.0,262.8" fill="url(#cb)"/>
<line x1="299.0" y1="261.2" x2="266.0" y2="344.2" stroke="#5555ff" stroke-width="1.5"/>
<line x1="303.0" y1="262.8" x2="270.0" y2="345.8" stroke="#5555ff" stroke-width="1.5"/>
<polygon points="266.0,270.9 299.0,345.9 303.0,344.1 270.0,269.1" fill="url(#cb)"/>
<line x1="266.0" y1="270.9" x2="299.0" y2="345.9" stroke="#5555ff" stroke-width="1.5"/>
<line x1="270.0" y1="269.1" x2="303.0" y2="344.1" stroke="#5555ff" stroke-width="1.5"/>
<polygon points="300.0,351.2 264.0,439.2 268.0,440.8 304.0,352.8" fill="url(#cb)"/>
<line x1="300.0" y1="351.2" x2="264.0" y2="439.2" stroke="#5555ff" stroke-width="1.5"/>
<line x1="304.0" y1="352.8" x2="268.0" y2="440.8" stroke="#5555ff" stroke-width="1.5"/>
<polygon points="264.0,356.9 300.0,437.9 304.0,436.1 268.0,355.1" fill="url(#cb)"/>
<line x1="264.0" y1="356.9" x2="300.0" y2="437.9" stroke="#5555ff" stroke-width="1.5"/>
<line x1="268.0" y1="355.1" x2="304.0" y2="436.1" stroke="#5555ff" stroke-width="1.5"/>
<line x1="303.0" y1="258.0" x2="268.0" y2="253.0" stroke="#5555ff" stroke-width="2.5"/>
<line x1="303.0" y1="258.0" x2="268.0" y2="263.0" stroke="#5555ff" stroke-width="2.5"/>
<line x1="303.0" y1="348.0" x2="268.0" y2="343.0" stroke="#5555ff" stroke-width="2.5"/>
<line x1="303.0" y1="348.0" x2="268.0" y2="353.0" stroke="#5555ff" stroke-width="2.5"/>
<line x1="178.0" y1="167.0" x2="128.0" y2="176.0" stroke="#55ff55" stroke-width="1"/>
<line x1="177.6" y1="165.0" x2="127.8" y2="175.0" stroke="#55ff55" stroke-width="1"/>
<line x1="128.0" y1="176.0" x2="140.2" y2="170.3" stroke="#55ff55" stroke-width="1"/>
<line x1="128.0" y1="176.0" x2="141.4" y2="177.1" stroke="#55ff55" stroke-width="1"/>
<line x1="128.0" y1="176.0" x2="134.9" y2="174.8" stroke="#55ff55" stroke-width="1"/>
<line x1="178.0" y1="175.0" x2="133.0" y2="197.0" stroke="#55ff55" stroke-width="1"/>
<line x1="177.1" y1="173.2" x2="132.6" y2="196.1" stroke="#55ff55" stroke-width="1"/>
<line x1="133.0" y1="197.0" x2="143.1" y2="188.1" stroke="#55ff55" stroke-width="1"/>
<line x1="133.0" y1="197.0" x2="146.2" y2="194.4" stroke="#55ff55" stroke-width="1"/>
<line x1="133.0" y1="197.0" x2="139.3" y2="193.9" stroke="#55ff55" stroke-width="1"/>
<line x1="178.0" y1="198.0" x2="140.0" y2="222.0" stroke="#55ff55" stroke-width="1"/>
<line x1="176.9" y1="196.3" x2="139.5" y2="221.2" stroke="#55ff55" stroke-width="1"/>
<line x1="140.0" y1="222.0" x2="149.1" y2="212.1" stroke="#55ff55" stroke-width="1"/>
<line x1="140.0" y1="222.0" x2="152.9" y2="218.0" stroke="#55ff55" stroke-width="1"/>
<line x1="140.0" y1="222.0" x2="145.9" y2="218.3" stroke="#55ff55" stroke-width="1"/>
<line x1="178.0" y1="222.0" x2="145.0" y2="240.0" stroke="#55ff55" stroke-width="1"/>
<line x1="177.0" y1="220.2" x2="144.5" y2="239.1" stroke="#55ff55" stroke-width="1"/>
<line x1="145.0" y1="240.0" x2="154.7" y2="230.7" stroke="#55ff55" stroke-width="1"/>
<line x1="145.0" y1="240.0" x2="158.1" y2="236.8" stroke="#55ff55" stroke-width="1"/>
<line x1="145.0" y1="240.0" x2="151.1" y2="236.6" stroke="#55ff55" stroke-width="1"/>
<line x1="176.0" y1="182.0" x2="141.0" y2="198.0" stroke="#55ff55" stroke-width="1"/>
<line x1="175.2" y1="180.2" x2="140.6" y2="197.1" stroke="#55ff55" stroke-width="1"/>
<line x1="141.0" y1="198.0" x2="151.4" y2="189.4" stroke="#55ff55" stroke-width="1"/>
<line x1="141.0" y1="198.0" x2="154.3" y2="195.8" stroke="#55ff55" stroke-width="1"/>
<line x1="141.0" y1="198.0" x2="147.4" y2="195.1" stroke="#55ff55" stroke-width="1"/>
<line x1="178.0" y1="200.0" x2="151.0" y2="216.0" stroke="#55ff55" stroke-width="1"/>
<line x1="177.0" y1="198.3" x2="150.5" y2="215.1" stroke="#55ff55" stroke-width="1"/>
<line x1="151.0" y1="216.0" x2="160.4" y2="206.4" stroke="#55ff55" stroke-width="1"/>
<line x1="151.0" y1="216.0" x2="164.0" y2="212.4" stroke="#55ff55" stroke-width="1"/>
<line x1="151.0" y1="216.0" x2="157.0" y2="212.4" stroke="#55ff55" stroke-width="1"/>
<line x1="199.0" y1="178.0" x2="187.0" y2="195.0" stroke="#55ff55" stroke-width="1"/>
<polygon points="187.0,195.0 189.6,188.2 192.5,190.3" fill="#55ff55"/>
<line x1="216.0" y1="179.0" x2="211.0" y2="196.0" stroke="#55ff55" stroke-width="1"/>
<polygon points="211.0,196.0 211.5,187.8 215.0,188.8" fill="#55ff55"/>
<line x1="197.0" y1="200.0" x2="188.0" y2="213.0" stroke="#55ff55" stroke-width="1"/>
<polygon points="188.0,213.0 189.9,207.0 192.9,209.1" fill="#55ff55"/>
<line x1="205.0" y1="200.0" x2="197.0" y2="215.0" stroke="#55ff55" stroke-width="1"/>
<polygon points="197.0,215.0 198.2,208.9 201.4,210.6" fill="#55ff55"/>
<line x1="216.0" y1="198.0" x2="212.0" y2="215.0" stroke="#55ff55" stroke-width="1"/>
<polygon points="212.0,215.0 211.6,208.7 215.1,209.6" fill="#55ff55"/>
<line x1="188.0" y1="169.0" x2="200.0" y2="190.0" stroke="#55ff55" stroke-width="1"/>
<line x1="212.0" y1="170.0" x2="211.0" y2="196.0" stroke="#55ff55" stroke-width="1"/>
<polygon points="210.5,167.0 214.5,167.0 212.0,176.0" fill="#55ff55"/>
<line x1="271.0" y1="167.0" x2="321.0" y2="176.0" stroke="#55ff55" stroke-width="1"/>
<line x1="271.4" y1="165.0" x2="321.2" y2="175.0" stroke="#55ff55" stroke-width="1"/>
<line x1="321.0" y1="176.0" x2="308.8" y2="170.3" stroke="#55ff55" stroke-width="1"/>
<line x1="321.0" y1="176.0" x2="307.6" y2="177.1" stroke="#55ff55" stroke-width="1"/>
<line x1="321.0" y1="176.0" x2="314.1" y2="174.8" stroke="#55ff55" stroke-width="1"/>
<line x1="271.0" y1="175.0" x2="316.0" y2="197.0" stroke="#55ff55" stroke-width="1"/>
<line x1="271.9" y1="173.2" x2="316.4" y2="196.1" stroke="#55ff55" stroke-width="1"/>
<line x1="316.0" y1="197.0" x2="305.9" y2="188.1" stroke="#55ff55" stroke-width="1"/>
<line x1="316.0" y1="197.0" x2="302.8" y2="194.4" stroke="#55ff55" stroke-width="1"/>
<line x1="316.0" y1="197.0" x2="309.7" y2="193.9" stroke="#55ff55" stroke-width="1"/>
<line x1="271.0" y1="198.0" x2="309.0" y2="222.0" stroke="#55ff55" stroke-width="1"/>
<line x1="272.1" y1="196.3" x2="309.5" y2="221.2" stroke="#55ff55" stroke-width="1"/>
<line x1="309.0" y1="222.0" x2="299.9" y2="212.1" stroke="#55ff55" stroke-width="1"/>
<line x1="309.0" y1="222.0" x2="296.1" y2="218.0" stroke="#55ff55" stroke-width="1"/>
<line x1="309.0" y1="222.0" x2="303.1" y2="218.3" stroke="#55ff55" stroke-width="1"/>
<line x1="271.0" y1="222.0" x2="304.0" y2="240.0" stroke="#55ff55" stroke-width="1"/>
<line x1="272.0" y1="220.2" x2="304.5" y2="239.1" stroke="#55ff55" stroke-width="1"/>
<line x1="304.0" y1="240.0" x2="294.3" y2="230.7" stroke="#55ff55" stroke-width="1"/>
<line x1="304.0" y1="240.0" x2="290.9" y2="236.8" stroke="#55ff55" stroke-width="1"/>
<line x1="304.0" y1="240.0" x2="297.9" y2="236.6" stroke="#55ff55" stroke-width="1"/>
<line x1="273.0" y1="182.0" x2="308.0" y2="198.0" stroke="#55ff55" stroke-width="1"/>
<line x1="273.8" y1="180.2" x2="308.4" y2="197.1" stroke="#55ff55" stroke-width="1"/>
<line x1="308.0" y1="198.0" x2="297.6" y2="189.4" stroke="#55ff55" stroke-width="1"/>
<line x1="308.0" y1="198.0" x2="294.7" y2="195.8" stroke="#55ff55" stroke-width="1"/>
<line x1="308.0" y1="198.0" x2="301.6" y2="195.1" stroke="#55ff55" stroke-width="1"/>
<line x1="271.0" y1="200.0" x2="298.0" y2="216.0" stroke="#55ff55" stroke-width="1"/>
<line x1="272.0" y1="198.3" x2="298.5" y2="215.1" stroke="#55ff55" stroke-width="1"/>
<line x1="298.0" y1="216.0" x2="288.6" y2="206.4" stroke="#55ff55" stroke-width="1"/>
<line x1="298.0" y1="216.0" x2="285.0" y2="212.4" stroke="#55ff55" stroke-width="1"/>
<line x1="298.0" y1="216.0" x2="292.0" y2="212.4" stroke="#55ff55" stroke-width="1"/>
<line x1="250.0" y1="178.0" x2="262.0" y2="195.0" stroke="#55ff55" stroke-width="1"/>
<polygon points="262.0,195.0 256.5,190.3 259.4,188.2" fill="#55ff55"/>
<line x1="233.0" y1="179.0" x2="238.0" y2="196.0" stroke="#55ff55" stroke-width="1"/>
<polygon points="238.0,196.0 234.0,188.8 237.5,187.8" fill="#55ff55"/>
<line x1="252.0" y1="200.0" x2="261.0" y2="213.0" stroke="#55ff55" stroke-width="1"/>
<polygon points="261.0,213.0 256.1,209.1 259.1,207.0" fill="#55ff55"/>
<line x1="244.0" y1="200.0" x2="252.0" y2="215.0" stroke="#55ff55" stroke-width="1"/>
<polygon points="252.0,215.0 247.6,210.6 250.8,208.9" fill="#55ff55"/>
<line x1="233.0" y1="198.0" x2="237.0" y2="215.0" stroke="#55ff55" stroke-width="1"/>
<polygon points="237.0,215.0 233.9,209.6 237.4,208.7" fill="#55ff55"/>
<line x1="261.0" y1="169.0" x2="249.0" y2="190.0" stroke="#55ff55" stroke-width="1"/>
<line x1="237.0" y1="170.0" x2="238.0" y2="196.0" stroke="#55ff55" stroke-width="1"/>
<polygon points="238.5,167.0 234.5,167.0 237.0,176.0" fill="#55ff55"/>
</svg>
<div class="abs" style="left:0;top:0;width:447px;height:13px;background:#555;"></div>
<div class="abs" style="left:0;top:0;width:447px;height:1px;background:#aaa;"></div>
<div class="abs" style="left:0;top:0;width:1px;height:13px;background:#aaa;"></div>
<div class="t" style="left:8px;top:0px;color:#aaa;">Recipiente da 1000 mc</div>

<div class="abs" style="left:448px;top:0;width:191px;height:13px;background:#555;"></div>
<div class="abs" style="left:448px;top:0;width:191px;height:1px;background:#aaa;"></div>
<div class="abs" style="left:448px;top:0;width:1px;height:13px;background:#aaa;"></div>
<div class="t" style="left:456px;top:0px;color:#aaa;">FILE:bin</div>

<div class="abs" style="left:448px;top:14px;width:191px;height:13px;background:#555;"></div>
<div class="abs" style="left:448px;top:14px;width:191px;height:1px;background:#aaa;"></div>
<div class="abs" style="left:448px;top:14px;width:1px;height:13px;background:#aaa;"></div>
<div class="t" style="left:456px;top:14px;color:#fff;">Plate Elements</div>

<!-- panel 1 -->
<div class="abs" style="left:448px;top:28px;width:192px;height:433px;background:#aaa;"></div>
<div class="abs" style="left:455px;top:36px;width:177px;height:176px;background:#000;"></div>
<svg class="abs" style="left:0;top:0" width="640" height="480" shape-rendering="crispEdges">
 <rect x="509" y="44" width="68" height="1" fill="#ffff55"/>
 <rect x="576" y="44" width="1" height="159" fill="#ffff55"/>
 <rect x="509" y="202" width="68" height="1" fill="#ffff55"/>
 <rect x="509" y="44" width="1" height="159" fill="#ff55ff"/>
 <g fill="#fff">
  <rect x="544" y="88" width="1" height="35"/><rect x="545" y="122" width="1" height="2"/>
  <rect x="552" y="123" width="25" height="1"/>
 </g>
 <g fill="none" stroke="#fff" stroke-width="1">
  <path d="M547.5 85 V87.5 L549.5 89.5 L551.5 87.5 V85 M549.5 89.5 V92"/>
  <path d="M547 120.5 H552 M551.5 120.5 V121.5 L547.5 125.5 V126.5 M547 126.5 H552"/>
  <path d="M580.5 120 V121.5 L584.5 125.5 V127 M584.5 120 V121.5 L580.5 125.5 V127"/>
 </g>
</svg>

<!-- panel 2 -->
<div class="abs" style="left:448px;top:224px;width:192px;height:140px;box-sizing:border-box;border-top:1px solid #fff;border-left:1px solid #fff;border-right:1px solid #555;border-bottom:1px solid #555;background:#aaa;"></div>
<div class="abs" style="left:452px;top:231px;width:184px;height:126px;box-sizing:border-box;border-top:1px solid #555;border-left:1px solid #555;border-right:1px solid #fff;border-bottom:1px solid #fff;"></div>

<!-- group boxes -->
<svg class="abs" style="left:0;top:0" width="640" height="480" shape-rendering="crispEdges">
 <g fill="#555">
  <rect x="460" y="245" width="4" height="1"/><rect x="504" y="245" width="28" height="1"/>
  <rect x="460" y="245" width="1" height="42"/><rect x="531" y="245" width="1" height="42"/><rect x="460" y="286" width="72" height="1"/>
  <rect x="540" y="245" width="4" height="1"/><rect x="592" y="245" width="36" height="1"/>
  <rect x="540" y="245" width="1" height="28"/><rect x="627" y="245" width="1" height="28"/><rect x="540" y="272" width="88" height="1"/>
  <rect x="540" y="287" width="4" height="1"/><rect x="608" y="287" width="20" height="1"/>
  <rect x="540" y="287" width="1" height="56"/><rect x="627" y="287" width="1" height="56"/><rect x="540" y="342" width="88" height="1"/>
 </g>
</svg>
<div class="t" style="left:472px;top:238px;color:#555;">Pan</div>
<div class="t" style="left:552px;top:238px;color:#555;">Size</div>
<div class="t" style="left:552px;top:280px;color:#555;">Rotate</div>

<!-- buttons -->
<div class="btn" style="left:472px;top:252px;width:24px;height:14px;"></div>
<div class="btn" style="left:496px;top:252px;width:24px;height:14px;"></div>
<div class="btn" style="left:472px;top:266px;width:24px;height:14px;"></div>
<div class="btn" style="left:496px;top:266px;width:24px;height:14px;"></div>
<div class="btn" style="left:552px;top:252px;width:24px;height:14px;"></div>
<div class="btn" style="left:592px;top:252px;width:24px;height:14px;"></div>
<div class="btn" style="left:552px;top:294px;width:24px;height:14px;"></div>
<div class="btn" style="left:552px;top:308px;width:24px;height:14px;"></div>
<div class="btn" style="left:552px;top:322px;width:24px;height:14px;"></div>
<div class="btn" style="left:592px;top:294px;width:24px;height:14px;"></div>
<div class="btn" style="left:592px;top:308px;width:24px;height:14px;"></div>
<div class="btn" style="left:592px;top:322px;width:24px;height:14px;"></div>
<div class="btn" style="left:464px;top:294px;width:32px;height:14px;"></div>
<div class="sunk" style="left:496px;top:294px;width:32px;height:14px;"></div>
<div class="btn" style="left:464px;top:322px;width:64px;height:14px;"></div>
<div class="abs" style="left:464px;top:336px;width:64px;height:14px;background:#0000aa;box-sizing:border-box;border-top:1px solid #5555ff;border-left:1px solid #5555ff;border-right:1px solid #000;border-bottom:1px solid #000;"></div>

<svg class="abs" style="left:0;top:0" width="640" height="480" shape-rendering="crispEdges">
 <g fill="#000">
  <!-- up -->
  <rect x="483" y="254" width="2" height="10"/><rect x="482" y="256" width="4" height="1"/><rect x="481" y="257" width="6" height="1"/>
  <!-- down -->
  <rect x="507" y="254" width="2" height="10"/><rect x="506" y="261" width="4" height="1"/><rect x="505" y="260" width="6" height="1"/>
  <!-- left -->
  <rect x="480" y="272" width="8" height="2"/><rect x="482" y="271" width="1" height="4"/><rect x="483" y="270" width="1" height="6"/>
  <!-- right -->
  <rect x="504" y="272" width="8" height="2"/><rect x="509" y="271" width="1" height="4"/><rect x="508" y="270" width="1" height="6"/>
  <!-- minus -->
  <rect x="560" y="258" width="7" height="1"/>
  <rect x="560" y="300" width="7" height="1"/><rect x="560" y="314" width="7" height="1"/><rect x="560" y="328" width="7" height="1"/>
  <!-- plus -->
  <rect x="601" y="258" width="6" height="1"/><rect x="603" y="256" width="2" height="5"/>
  <rect x="601" y="300" width="6" height="1"/><rect x="603" y="298" width="2" height="5"/>
  <rect x="601" y="314" width="6" height="1"/><rect x="603" y="312" width="2" height="5"/>
  <rect x="601" y="328" width="6" height="1"/><rect x="603" y="326" width="2" height="5"/>
 </g>
</svg>
<div class="t" style="left:576px;top:294px;color:#555;">RX</div>
<div class="t" style="left:576px;top:308px;color:#555;">RY</div>
<div class="t" style="left:576px;top:322px;color:#555;">RZ</div>
<div class="t" style="left:472px;top:294px;color:#000;">&#948;&#952;</div>
<div class="t" style="left:504px;top:294px;color:#555;">90</div>
<div class="t" style="left:472px;top:322px;color:#000;"><span style="color:#aa0000">R</span>edraw</div>
<div class="t" style="left:472px;top:336px;color:#fff;">Cancel</div>

<!-- panel 3 -->
<div class="abs" style="left:448px;top:379px;width:192px;height:82px;box-sizing:border-box;border-top:1px solid #fff;border-left:1px solid #fff;border-right:1px solid #555;background:#aaa;"></div>
<div class="abs" style="left:452px;top:385px;width:184px;height:70px;box-sizing:border-box;border-top:1px solid #555;border-left:1px solid #555;border-right:1px solid #fff;border-bottom:1px solid #fff;"></div>
<div class="sunk" style="left:456px;top:392px;width:32px;height:14px;"></div>
<div class="sunk" style="left:456px;top:406px;width:32px;height:14px;"></div>
<div class="sunk" style="left:456px;top:420px;width:32px;height:14px;"></div>
<div class="abs" style="left:456px;top:434px;width:32px;height:14px;background:#555;box-sizing:border-box;border-right:1px solid #000;border-bottom:1px solid #000;"></div>
<div class="t" style="left:464px;top:392px;color:#555;">RX</div>
<div class="t" style="left:464px;top:406px;color:#555;">RY</div>
<div class="t" style="left:464px;top:420px;color:#555;">RZ</div>
<div class="t" style="left:464px;top:434px;color:#aaa;">WP</div>
<div class="t" style="left:512px;top:392px;color:#555;">0.0</div>
<div class="t" style="left:504px;top:406px;color:#555;">-0.0</div>
<div class="t" style="left:512px;top:420px;color:#555;">0.0</div>
<div class="t" style="left:496px;top:434px;color:#555;">Cartes</div>
<svg class="abs" style="left:0;top:0" width="640" height="480" shape-rendering="crispEdges">
 <g fill="#fff">
  <rect x="571" y="403" width="1" height="35"/><rect x="572" y="437" width="1" height="2"/>
  <rect x="579" y="438" width="26" height="1"/>
 </g>
 <g fill="none" stroke="#fff" stroke-width="1">
  <path d="M574.5 400 V402.5 L576.5 404.5 L578.5 402.5 V400 M576.5 404.5 V407"/>
  <path d="M574 435.5 H579 M578.5 435.5 V436.5 L574.5 440.5 V441.5 M574 441.5 H579"/>
  <path d="M606.5 435 V436.5 L610.5 440.5 V442 M610.5 435 V436.5 L606.5 440.5 V442"/>
 </g>
</svg>

</div></body></html>
